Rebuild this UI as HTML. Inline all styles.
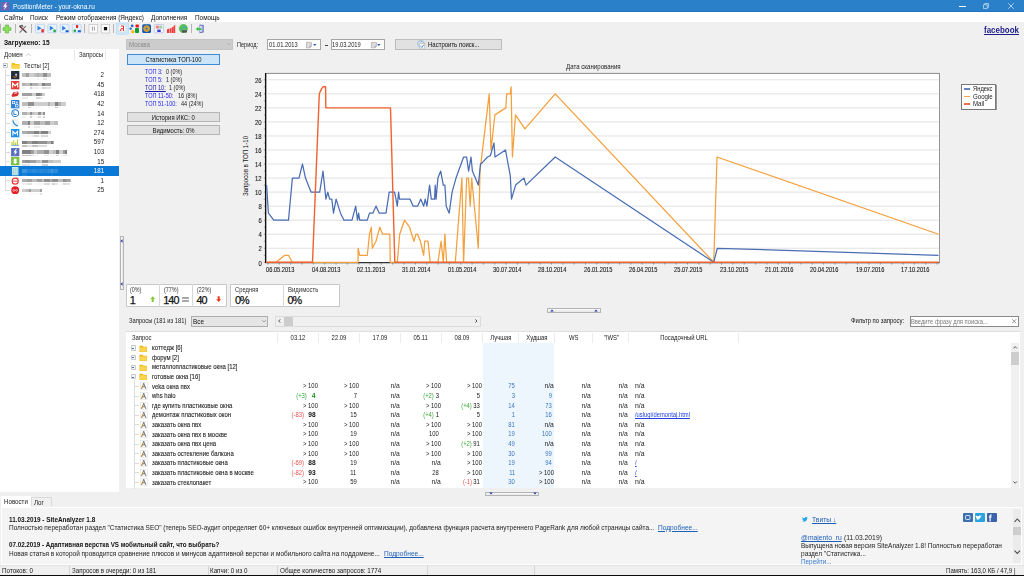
<!DOCTYPE html><html><head><meta charset="utf-8"><style>
html,body{margin:0;padding:0;}
body{width:1024px;height:576px;overflow:hidden;position:relative;background:#f0f0f0;font-family:"Liberation Sans", sans-serif;color:#000;}
.t{position:absolute;white-space:pre;}
.r{position:absolute;box-sizing:border-box;}
svg{position:absolute;overflow:visible;}

</style></head><body>
<div class="r" style="left:0.00px;top:0.00px;width:1024.00px;height:12.00px;background:#2a80c9;"></div>
<div class="r" style="left:0.00px;top:11.20px;width:1024.00px;height:0.80px;background:#1f74c2;"></div>
<svg style="left:1px;top:2px" width="8.5" height="8.5" viewBox="0 0 17 17"><rect x="0" y="0" width="17" height="17" rx="1" fill="#6f63b4"/><path d="M10 1 L4 9.5 L8 9.5 L6 16 L13 7 L9 7 L11.5 1 Z" fill="#fff"/></svg>
<div class="t" style="left:12.50px;top:1.90px;font-size:6.6px;line-height:10px;transform:scaleX(0.9836);transform-origin:0 50%;color:#fff;">PositionMeter - your-okna.ru</div>
<div class="r" style="left:959.30px;top:5.50px;width:6.30px;height:0.50px;background:#fff;"></div>
<svg style="left:983px;top:2.5px" width="6" height="6" viewBox="0 0 12 12"><path d="M1 3.5 H8.5 V11 H1 Z M3.5 3.5 V1 H11 V8.5 H8.5" fill="none" stroke="#fff" stroke-width="1.1"/></svg>
<svg style="left:1007.5px;top:2.5px" width="6" height="6" viewBox="0 0 12 12"><path d="M0.5 0.5 L11.5 11.5 M11.5 0.5 L0.5 11.5" stroke="#fff" stroke-width="1.2"/></svg>
<div class="r" style="left:0.00px;top:12.00px;width:1024.00px;height:9.80px;background:#fff;"></div>
<div class="t" style="left:3.75px;top:13.20px;font-size:6.9px;line-height:10px;transform:scaleX(0.9275);transform-origin:0 50%;color:#111;">Сайты</div>
<div class="t" style="left:30.00px;top:13.20px;font-size:6.9px;line-height:10px;transform:scaleX(0.9275);transform-origin:0 50%;color:#111;">Поиск</div>
<div class="t" style="left:55.75px;top:13.20px;font-size:6.9px;line-height:10px;transform:scaleX(0.9275);transform-origin:0 50%;color:#111;">Режим отображения (Яндекс)</div>
<div class="t" style="left:151.25px;top:13.20px;font-size:6.9px;line-height:10px;transform:scaleX(0.9275);transform-origin:0 50%;color:#111;">Дополнения</div>
<div class="t" style="left:195.00px;top:13.20px;font-size:6.9px;line-height:10px;transform:scaleX(0.9275);transform-origin:0 50%;color:#111;">Помощь</div>
<div class="r" style="left:0.30px;top:23.80px;width:0.70px;height:9.40px;background:#b4b4b4;"></div>
<div class="r" style="left:14.50px;top:23.80px;width:0.70px;height:9.40px;background:#b4b4b4;"></div>
<div class="r" style="left:31.00px;top:23.80px;width:0.70px;height:9.40px;background:#b4b4b4;"></div>
<div class="r" style="left:84.30px;top:23.80px;width:0.70px;height:9.40px;background:#b4b4b4;"></div>
<div class="r" style="left:113.40px;top:23.80px;width:0.70px;height:9.40px;background:#b4b4b4;"></div>
<div class="r" style="left:191.00px;top:23.80px;width:0.70px;height:9.40px;background:#b4b4b4;"></div>
<svg style="left:0;top:0" width="220" height="40" viewBox="0 0 220 40">
<!-- green plus -->
<path d="M5.3 25 H8.6 V27.7 H11 V30.4 H8.6 V33 H5.3 V30.4 H3 V27.7 H5.3 Z" fill="#86e05a" stroke="#4fa42c" stroke-width="0.5"/>
<!-- tools -->
<path d="M19.5 26 L26.5 32.6" stroke="#333" stroke-width="1.3"/>
<path d="M19.6 32.6 L25.8 26.2" stroke="#777" stroke-width="1.2"/>
<path d="M19 25.8 L22.5 24.8 L23.5 27 Z" fill="#555"/>
<path d="M21.5 27.6 L23.3 29.3" stroke="#c33" stroke-width="1.1"/>
<!-- blue icons -->
<g>
<rect x="35.5" y="24.3" width="9" height="8.5" rx="1" fill="#e6f3fb" stroke="#a9c3ec" stroke-width="0.6"/>
<path d="M37.5 25.8 L41.5 28.2 L37.5 30.6 Z" fill="#2b7fe0"/>
<rect x="41.4" y="29.2" width="2.4" height="3.2" fill="#e8272a"/>
</g>
<g>
<rect x="47.9" y="24.3" width="8.8" height="8.5" rx="1" fill="#e6f3fb" stroke="#a9c3ec" stroke-width="0.6"/>
<path d="M49.8 25.8 L53.8 28.2 L49.8 30.6 Z" fill="#2b7fe0"/>
<circle cx="54.6" cy="31" r="1.4" fill="#28a745"/>
</g>
<g>
<rect x="60.2" y="24.3" width="8.8" height="8.5" rx="1" fill="#e6f3fb" stroke="#a9c3ec" stroke-width="0.6"/>
<path d="M62.1 25.8 L66.1 28.2 L62.1 30.6 Z" fill="#2b7fe0"/>
<rect x="65.6" y="30.2" width="3" height="2" fill="#1a5fd0"/>
</g>
<g>
<rect x="72.3" y="24.3" width="8.8" height="8.5" rx="1" fill="#e6f3fb" stroke="#a9c3ec" stroke-width="0.6"/>
<rect x="76" y="25" width="2.2" height="3" fill="#e8272a"/>
<circle cx="74.8" cy="30.8" r="1.4" fill="#28a745"/>
<rect x="77.8" y="30.2" width="3" height="2" fill="#1a5fd0"/>
</g>
<!-- pause -->
<rect x="89" y="24.4" width="8.5" height="8.6" fill="#fcfcfc" stroke="#b8b8b8" stroke-width="0.6"/>
<rect x="91.9" y="26.6" width="0.7" height="4" fill="#777"/>
<rect x="93.9" y="26.6" width="0.7" height="4" fill="#777"/>
<!-- stop -->
<rect x="101.2" y="24.4" width="8.5" height="8.6" fill="#fcfcfc" stroke="#b8b8b8" stroke-width="0.6"/>
<rect x="103.9" y="27" width="3.2" height="3.3" fill="#111"/>
<!-- yandex highlighted -->
<rect x="116.2" y="23" width="12.4" height="11.2" fill="#cde8fc" stroke="#a5d3f7" stroke-width="0.5"/>
<circle cx="122.2" cy="28.6" r="4.2" fill="#f4f4f4" stroke="#ccc" stroke-width="0.4"/>
<path d="M121 26 L123.5 26 L123.5 31.2 M121.3 28.6 L123.4 28.6 M121.3 28.6 L120.2 31.2" stroke="#e33" stroke-width="1" fill="none"/>
<!-- google -->
<circle cx="132.2" cy="25.8" r="1.4" fill="#2a64c4"/>
<circle cx="130.7" cy="28.6" r="1.2" fill="#2a64c4"/>
<circle cx="132.8" cy="31.7" r="1.6" fill="#f5b800"/>
<rect x="135.5" y="24.6" width="3.4" height="3" rx="0.8" fill="#e8191d"/>
<rect x="135" y="28" width="4" height="5" rx="1" fill="#109a3c"/>
<!-- disc -->
<rect x="142.2" y="24.3" width="8.8" height="8.7" rx="1.5" fill="#1456b2"/>
<circle cx="146.6" cy="28.6" r="3.4" fill="#c59d3c"/>
<circle cx="146.6" cy="28.6" r="0.8" fill="#2266cc"/>
<!-- grid -->
<rect x="154.3" y="24.5" width="9.3" height="8.3" rx="1" fill="#f8f8ff" stroke="#a8a8e8" stroke-width="0.6"/>
<rect x="155.8" y="25.6" width="3" height="3" fill="#f08080"/>
<rect x="159.2" y="25.6" width="3" height="3" fill="#9ad49a"/>
<rect x="157.3" y="29.6" width="3.4" height="2.4" fill="#2b3fd8"/>
<!-- red bars -->
<path d="M167 33 V29.4 L169 28.6 V33 Z M169.5 33 V28.8 L171.6 27.8 V33 Z M172 33 V27.4 L173.6 26.3 V33 Z M173.8 33 V26 L175.2 24.8 V33 Z" fill="#f23c3c"/>
<!-- globe -->
<circle cx="183.4" cy="28.6" r="4.5" fill="#5cbf5c"/>
<path d="M181 30 L184 26.5 L186.5 27.5" stroke="#3a9ad8" stroke-width="0.9" fill="none"/>
<rect x="182" y="30.2" width="5" height="2.4" fill="#555"/>
<!-- exit -->
<path d="M199.5 24.6 L203.7 25 V32.6 L199.5 33.2 Z" fill="#6b6bc0"/>
<path d="M200 25.6 L202.5 26 V31.6 L200 32.2 Z" fill="#c9d6f5"/>
<path d="M195.8 29 L198.3 26.8 V28.2 L201.4 28.2 V30 L198.3 30 V31.3 Z" fill="#39c23f"/>
</svg>

<div class="t" style="left:4.40px;top:37.60px;font-size:6.9px;line-height:10px;font-weight:bold;transform:scaleX(0.9502);transform-origin:0 50%;color:#111;">Загружено: 15</div>
<div class="r" style="left:0.00px;top:49.00px;width:119.40px;height:443.00px;background:#fff;"></div>
<div class="r" style="left:73.50px;top:49.50px;width:0.70px;height:10.50px;background:#e8e8e8;"></div>
<div class="r" style="left:105.40px;top:49.50px;width:0.70px;height:10.50px;background:#e8e8e8;"></div>
<div class="t" style="left:3.50px;top:49.90px;font-size:7.3px;line-height:10px;transform:scaleX(0.8447);transform-origin:0 50%;color:#222;">Домен</div>
<svg style="left:25.5px;top:53px" width="5" height="3" viewBox="0 0 10 6"><path d="M1 5.5 L5 1.5 L9 5.5" fill="none" stroke="#a0a0a0" stroke-width="1.2"/></svg>
<div class="t" style="left:79.40px;top:49.90px;font-size:7.3px;line-height:10px;transform:scaleX(0.8186);transform-origin:0 50%;color:#222;">Запросы</div>
<div class="r" style="left:2.50px;top:62.80px;width:5.20px;height:5.20px;background:#f7f7f7;border:0.7px solid #c9c9c9;border-radius:0.8px;"></div>
<div class="r" style="left:4.10px;top:65.10px;width:2.00px;height:0.70px;background:#4a6ad0;"></div>
<svg style="left:10.5px;top:61.8px" width="10" height="7" viewBox="0 0 20 14"><path d="M1 2 H7 L9 4 H17 V13 H1 Z" fill="#f2c21c"/><path d="M1 6 H19 L17 13 H1 Z" fill="#fbd44a"/></svg>
<div class="t" style="left:23.75px;top:60.60px;font-size:7.3px;line-height:10px;transform:scaleX(0.8280);transform-origin:0 50%;color:#222;">Тесты [2]</div>
<div class="r" style="left:4.6px;top:68.5px;width:0;height:121.80px;border-left:0.7px solid #dcdcdc;"></div>
<div class="r" style="left:5.2px;top:74.80px;width:5px;height:0;border-top:0.7px solid #dcdcdc;"></div>
<div class="r" style="left:5.2px;top:84.40px;width:5px;height:0;border-top:0.7px solid #dcdcdc;"></div>
<div class="r" style="left:5.2px;top:94.00px;width:5px;height:0;border-top:0.7px solid #dcdcdc;"></div>
<div class="r" style="left:5.2px;top:103.60px;width:5px;height:0;border-top:0.7px solid #dcdcdc;"></div>
<div class="r" style="left:5.2px;top:113.20px;width:5px;height:0;border-top:0.7px solid #dcdcdc;"></div>
<div class="r" style="left:5.2px;top:122.80px;width:5px;height:0;border-top:0.7px solid #dcdcdc;"></div>
<div class="r" style="left:5.2px;top:132.40px;width:5px;height:0;border-top:0.7px solid #dcdcdc;"></div>
<div class="r" style="left:5.2px;top:142.00px;width:5px;height:0;border-top:0.7px solid #dcdcdc;"></div>
<div class="r" style="left:5.2px;top:151.60px;width:5px;height:0;border-top:0.7px solid #dcdcdc;"></div>
<div class="r" style="left:5.2px;top:161.20px;width:5px;height:0;border-top:0.7px solid #dcdcdc;"></div>
<div class="r" style="left:5.2px;top:170.80px;width:5px;height:0;border-top:0.7px solid #dcdcdc;"></div>
<div class="r" style="left:5.2px;top:180.40px;width:5px;height:0;border-top:0.7px solid #dcdcdc;"></div>
<div class="r" style="left:5.2px;top:190.00px;width:5px;height:0;border-top:0.7px solid #dcdcdc;"></div>
<div class="r" style="left:0.00px;top:166.00px;width:119.40px;height:9.80px;background:#0a78d6;"></div>
<svg style="left:11.3px;top:70.90px" width="8.4" height="8.3" viewBox="0 0 18 18"><rect width="18" height="18" fill="#232f3e"/><path d="M5 12 Q9 15 13 12" stroke="#f90" stroke-width="1.6" fill="none"/><rect x="9" y="6" width="4" height="4" fill="#ddd"/></svg>
<div class="r" style="left:22.4px;top:73.30px;width:28.85px;height:7px;filter:blur(0.7px);"><div style="position:absolute;left:0.00px;top:0;width:3.35px;height:3.5px;background:rgb(190,190,190)"></div><div style="position:absolute;left:0.00px;top:4.6px;width:3.35px;height:1.8px;background:rgb(250,250,250)"></div><div style="position:absolute;left:3.30px;top:0;width:3.35px;height:3.5px;background:rgb(160,160,160)"></div><div style="position:absolute;left:6.60px;top:0;width:5.55px;height:3.5px;background:rgb(205,205,205)"></div><div style="position:absolute;left:6.60px;top:4.6px;width:5.55px;height:1.8px;background:rgb(250,250,250)"></div><div style="position:absolute;left:12.10px;top:0;width:2.25px;height:3.5px;background:rgb(190,190,190)"></div><div style="position:absolute;left:12.10px;top:4.6px;width:2.25px;height:1.8px;background:rgb(250,250,250)"></div><div style="position:absolute;left:14.30px;top:0;width:2.25px;height:3.5px;background:rgb(175,175,175)"></div><div style="position:absolute;left:14.30px;top:4.6px;width:2.25px;height:1.8px;background:rgb(240,240,240)"></div><div style="position:absolute;left:16.50px;top:0;width:4.45px;height:3.5px;background:rgb(190,190,190)"></div><div style="position:absolute;left:16.50px;top:4.6px;width:4.45px;height:1.8px;background:rgb(250,250,250)"></div><div style="position:absolute;left:20.90px;top:0;width:3.35px;height:3.5px;background:rgb(145,145,145)"></div><div style="position:absolute;left:20.90px;top:4.6px;width:3.35px;height:1.8px;background:rgb(230,230,230)"></div><div style="position:absolute;left:24.20px;top:0;width:4.70px;height:3.5px;background:rgb(190,190,190)"></div></div>
<div class="t" style="right:919.50px;top:70.20px;font-size:7.3px;line-height:10px;transform:scaleX(0.8500);transform-origin:100% 50%;color:#222;">2</div>
<svg style="left:11.3px;top:80.50px" width="8.4" height="8.3" viewBox="0 0 18 18"><rect width="18" height="18" fill="#e53a33"/><path d="M3.5 14 V4.5 L9 10 L14.5 4.5 V14" stroke="#fff" stroke-width="2.6" fill="none"/></svg>
<div class="r" style="left:22.4px;top:82.90px;width:28.85px;height:7px;filter:blur(0.7px);"><div style="position:absolute;left:0.00px;top:0;width:2.25px;height:3.5px;background:rgb(175,175,175)"></div><div style="position:absolute;left:0.00px;top:4.6px;width:2.25px;height:1.8px;background:rgb(240,240,240)"></div><div style="position:absolute;left:2.20px;top:0;width:5.55px;height:3.5px;background:rgb(190,190,190)"></div><div style="position:absolute;left:7.70px;top:0;width:2.25px;height:3.5px;background:rgb(145,145,145)"></div><div style="position:absolute;left:7.70px;top:4.6px;width:2.25px;height:1.8px;background:rgb(210,210,210)"></div><div style="position:absolute;left:9.90px;top:0;width:5.55px;height:3.5px;background:rgb(175,175,175)"></div><div style="position:absolute;left:9.90px;top:4.6px;width:5.55px;height:1.8px;background:rgb(240,240,240)"></div><div style="position:absolute;left:15.40px;top:0;width:4.45px;height:3.5px;background:rgb(205,205,205)"></div><div style="position:absolute;left:15.40px;top:4.6px;width:4.45px;height:1.8px;background:rgb(250,250,250)"></div><div style="position:absolute;left:19.80px;top:0;width:3.35px;height:3.5px;background:rgb(130,130,130)"></div><div style="position:absolute;left:19.80px;top:4.6px;width:3.35px;height:1.8px;background:rgb(215,215,215)"></div><div style="position:absolute;left:23.10px;top:0;width:5.55px;height:3.5px;background:rgb(160,160,160)"></div><div style="position:absolute;left:23.10px;top:4.6px;width:5.55px;height:1.8px;background:rgb(225,225,225)"></div></div>
<div class="t" style="right:919.50px;top:79.80px;font-size:7.3px;line-height:10px;transform:scaleX(0.8500);transform-origin:100% 50%;color:#222;">45</div>
<svg style="left:11.3px;top:90.10px" width="8.4" height="8.3" viewBox="0 0 18 18"><path d="M1 12 L5 5 L15 3 L17 8 L14 13 L3 15 Z" fill="#d82b2b"/><path d="M6 6 L13 4.5 L14 7 L7 8 Z" fill="#f3d0d0"/></svg>
<div class="r" style="left:22.4px;top:92.50px;width:22.60px;height:7px;filter:blur(0.7px);"><div style="position:absolute;left:0.00px;top:0;width:5.55px;height:3.5px;background:rgb(160,160,160)"></div><div style="position:absolute;left:0.00px;top:4.6px;width:5.55px;height:1.8px;background:rgb(235,235,235)"></div><div style="position:absolute;left:5.50px;top:0;width:4.45px;height:3.5px;background:rgb(160,160,160)"></div><div style="position:absolute;left:9.90px;top:0;width:3.35px;height:3.5px;background:rgb(205,205,205)"></div><div style="position:absolute;left:13.20px;top:0;width:4.45px;height:3.5px;background:rgb(130,130,130)"></div><div style="position:absolute;left:13.20px;top:4.6px;width:4.45px;height:1.8px;background:rgb(215,215,215)"></div><div style="position:absolute;left:17.60px;top:0;width:2.25px;height:3.5px;background:rgb(145,145,145)"></div><div style="position:absolute;left:17.60px;top:4.6px;width:2.25px;height:1.8px;background:rgb(230,230,230)"></div><div style="position:absolute;left:19.80px;top:0;width:2.85px;height:3.5px;background:rgb(205,205,205)"></div><div style="position:absolute;left:19.80px;top:4.6px;width:2.85px;height:1.8px;background:rgb(250,250,250)"></div></div>
<div class="t" style="right:919.50px;top:89.40px;font-size:7.3px;line-height:10px;transform:scaleX(0.8500);transform-origin:100% 50%;color:#222;">418</div>
<svg style="left:11.3px;top:99.70px" width="8.4" height="8.3" viewBox="0 0 18 18"><rect width="18" height="18" fill="#2e7fd8"/><rect x="3" y="3" width="5" height="5" fill="none" stroke="#fff" stroke-width="1.4"/><rect x="10" y="10" width="5" height="5" fill="none" stroke="#fff" stroke-width="1.4"/><rect x="10" y="3" width="5" height="5" fill="#bcd"/></svg>
<div class="r" style="left:22.4px;top:102.10px;width:44.50px;height:7px;filter:blur(0.7px);"><div style="position:absolute;left:0.00px;top:0;width:5.55px;height:3.5px;background:rgb(190,190,190)"></div><div style="position:absolute;left:0.00px;top:4.6px;width:5.55px;height:1.8px;background:rgb(250,250,250)"></div><div style="position:absolute;left:5.50px;top:0;width:3.35px;height:3.5px;background:rgb(145,145,145)"></div><div style="position:absolute;left:5.50px;top:4.6px;width:3.35px;height:1.8px;background:rgb(210,210,210)"></div><div style="position:absolute;left:8.80px;top:0;width:3.35px;height:3.5px;background:rgb(145,145,145)"></div><div style="position:absolute;left:12.10px;top:0;width:3.35px;height:3.5px;background:rgb(205,205,205)"></div><div style="position:absolute;left:12.10px;top:4.6px;width:3.35px;height:1.8px;background:rgb(250,250,250)"></div><div style="position:absolute;left:15.40px;top:0;width:2.25px;height:3.5px;background:rgb(205,205,205)"></div><div style="position:absolute;left:15.40px;top:4.6px;width:2.25px;height:1.8px;background:rgb(250,250,250)"></div><div style="position:absolute;left:17.60px;top:0;width:3.35px;height:3.5px;background:rgb(205,205,205)"></div><div style="position:absolute;left:17.60px;top:4.6px;width:3.35px;height:1.8px;background:rgb(250,250,250)"></div><div style="position:absolute;left:20.90px;top:0;width:4.45px;height:3.5px;background:rgb(205,205,205)"></div><div style="position:absolute;left:25.30px;top:0;width:2.25px;height:3.5px;background:rgb(175,175,175)"></div><div style="position:absolute;left:25.30px;top:4.6px;width:2.25px;height:1.8px;background:rgb(250,250,250)"></div><div style="position:absolute;left:27.50px;top:0;width:5.55px;height:3.5px;background:rgb(205,205,205)"></div><div style="position:absolute;left:27.50px;top:4.6px;width:5.55px;height:1.8px;background:rgb(250,250,250)"></div><div style="position:absolute;left:33.00px;top:0;width:2.25px;height:3.5px;background:rgb(130,130,130)"></div><div style="position:absolute;left:33.00px;top:4.6px;width:2.25px;height:1.8px;background:rgb(195,195,195)"></div><div style="position:absolute;left:35.20px;top:0;width:3.35px;height:3.5px;background:rgb(175,175,175)"></div><div style="position:absolute;left:35.20px;top:4.6px;width:3.35px;height:1.8px;background:rgb(250,250,250)"></div><div style="position:absolute;left:38.50px;top:0;width:5.55px;height:3.5px;background:rgb(205,205,205)"></div></div>
<div class="t" style="right:919.50px;top:99.00px;font-size:7.3px;line-height:10px;transform:scaleX(0.8500);transform-origin:100% 50%;color:#222;">42</div>
<svg style="left:11.3px;top:109.30px" width="8.4" height="8.3" viewBox="0 0 18 18"><circle cx="9" cy="9" r="7.5" fill="#fff" stroke="#1c78d0" stroke-width="2.2"/><path d="M6 5 V12 H12" stroke="#1c78d0" stroke-width="2" fill="none"/></svg>
<div class="r" style="left:22.4px;top:111.70px;width:22.60px;height:7px;filter:blur(0.7px);"><div style="position:absolute;left:0.00px;top:0;width:2.25px;height:3.5px;background:rgb(175,175,175)"></div><div style="position:absolute;left:0.00px;top:4.6px;width:2.25px;height:1.8px;background:rgb(240,240,240)"></div><div style="position:absolute;left:2.20px;top:0;width:2.25px;height:3.5px;background:rgb(175,175,175)"></div><div style="position:absolute;left:2.20px;top:4.6px;width:2.25px;height:1.8px;background:rgb(250,250,250)"></div><div style="position:absolute;left:4.40px;top:0;width:3.35px;height:3.5px;background:rgb(205,205,205)"></div><div style="position:absolute;left:7.70px;top:0;width:2.25px;height:3.5px;background:rgb(145,145,145)"></div><div style="position:absolute;left:7.70px;top:4.6px;width:2.25px;height:1.8px;background:rgb(210,210,210)"></div><div style="position:absolute;left:9.90px;top:0;width:2.25px;height:3.5px;background:rgb(190,190,190)"></div><div style="position:absolute;left:9.90px;top:4.6px;width:2.25px;height:1.8px;background:rgb(250,250,250)"></div><div style="position:absolute;left:12.10px;top:0;width:3.35px;height:3.5px;background:rgb(205,205,205)"></div><div style="position:absolute;left:12.10px;top:4.6px;width:3.35px;height:1.8px;background:rgb(250,250,250)"></div><div style="position:absolute;left:15.40px;top:0;width:3.35px;height:3.5px;background:rgb(145,145,145)"></div><div style="position:absolute;left:15.40px;top:4.6px;width:3.35px;height:1.8px;background:rgb(220,220,220)"></div><div style="position:absolute;left:18.70px;top:0;width:2.25px;height:3.5px;background:rgb(205,205,205)"></div><div style="position:absolute;left:18.70px;top:4.6px;width:2.25px;height:1.8px;background:rgb(250,250,250)"></div><div style="position:absolute;left:20.90px;top:0;width:1.75px;height:3.5px;background:rgb(145,145,145)"></div><div style="position:absolute;left:20.90px;top:4.6px;width:1.75px;height:1.8px;background:rgb(210,210,210)"></div></div>
<div class="t" style="right:919.50px;top:108.60px;font-size:7.3px;line-height:10px;transform:scaleX(0.8500);transform-origin:100% 50%;color:#222;">14</div>
<svg style="left:11.3px;top:118.90px" width="8.4" height="8.3" viewBox="0 0 18 18"><path d="M2 1 H12 L17 9 L12 17 H2 Z" fill="#f2f2f2" stroke="#ddd" stroke-width="0.8"/><path d="M4 3 Q6 13 15 15" stroke="#1b8fe0" stroke-width="2.6" fill="none"/></svg>
<div class="r" style="left:22.4px;top:121.30px;width:35.10px;height:7px;filter:blur(0.7px);"><div style="position:absolute;left:0.00px;top:0;width:5.55px;height:3.5px;background:rgb(175,175,175)"></div><div style="position:absolute;left:0.00px;top:4.6px;width:5.55px;height:1.8px;background:rgb(250,250,250)"></div><div style="position:absolute;left:5.50px;top:0;width:2.25px;height:3.5px;background:rgb(130,130,130)"></div><div style="position:absolute;left:5.50px;top:4.6px;width:2.25px;height:1.8px;background:rgb(215,215,215)"></div><div style="position:absolute;left:7.70px;top:0;width:4.45px;height:3.5px;background:rgb(205,205,205)"></div><div style="position:absolute;left:7.70px;top:4.6px;width:4.45px;height:1.8px;background:rgb(250,250,250)"></div><div style="position:absolute;left:12.10px;top:0;width:5.55px;height:3.5px;background:rgb(160,160,160)"></div><div style="position:absolute;left:12.10px;top:4.6px;width:5.55px;height:1.8px;background:rgb(235,235,235)"></div><div style="position:absolute;left:17.60px;top:0;width:2.25px;height:3.5px;background:rgb(190,190,190)"></div><div style="position:absolute;left:17.60px;top:4.6px;width:2.25px;height:1.8px;background:rgb(250,250,250)"></div><div style="position:absolute;left:19.80px;top:0;width:3.35px;height:3.5px;background:rgb(190,190,190)"></div><div style="position:absolute;left:19.80px;top:4.6px;width:3.35px;height:1.8px;background:rgb(250,250,250)"></div><div style="position:absolute;left:23.10px;top:0;width:4.45px;height:3.5px;background:rgb(160,160,160)"></div><div style="position:absolute;left:27.50px;top:0;width:4.45px;height:3.5px;background:rgb(205,205,205)"></div><div style="position:absolute;left:27.50px;top:4.6px;width:4.45px;height:1.8px;background:rgb(250,250,250)"></div><div style="position:absolute;left:31.90px;top:0;width:3.25px;height:3.5px;background:rgb(190,190,190)"></div><div style="position:absolute;left:31.90px;top:4.6px;width:3.25px;height:1.8px;background:rgb(250,250,250)"></div></div>
<div class="t" style="right:919.50px;top:118.20px;font-size:7.3px;line-height:10px;transform:scaleX(0.8500);transform-origin:100% 50%;color:#222;">12</div>
<svg style="left:11.3px;top:128.50px" width="8.4" height="8.3" viewBox="0 0 18 18"><rect width="18" height="18" fill="#1d8fea"/><path d="M4 14 V5 L9 10 L14 5 V14" stroke="#fff" stroke-width="2.4" fill="none"/></svg>
<div class="r" style="left:22.4px;top:130.90px;width:28.85px;height:7px;filter:blur(0.7px);"><div style="position:absolute;left:0.00px;top:0;width:4.45px;height:3.5px;background:rgb(175,175,175)"></div><div style="position:absolute;left:0.00px;top:4.6px;width:4.45px;height:1.8px;background:rgb(250,250,250)"></div><div style="position:absolute;left:4.40px;top:0;width:5.55px;height:3.5px;background:rgb(160,160,160)"></div><div style="position:absolute;left:4.40px;top:4.6px;width:5.55px;height:1.8px;background:rgb(245,245,245)"></div><div style="position:absolute;left:9.90px;top:0;width:2.25px;height:3.5px;background:rgb(160,160,160)"></div><div style="position:absolute;left:9.90px;top:4.6px;width:2.25px;height:1.8px;background:rgb(235,235,235)"></div><div style="position:absolute;left:12.10px;top:0;width:4.45px;height:3.5px;background:rgb(130,130,130)"></div><div style="position:absolute;left:12.10px;top:4.6px;width:4.45px;height:1.8px;background:rgb(215,215,215)"></div><div style="position:absolute;left:16.50px;top:0;width:2.25px;height:3.5px;background:rgb(175,175,175)"></div><div style="position:absolute;left:16.50px;top:4.6px;width:2.25px;height:1.8px;background:rgb(250,250,250)"></div><div style="position:absolute;left:18.70px;top:0;width:2.25px;height:3.5px;background:rgb(130,130,130)"></div><div style="position:absolute;left:18.70px;top:4.6px;width:2.25px;height:1.8px;background:rgb(215,215,215)"></div><div style="position:absolute;left:20.90px;top:0;width:4.45px;height:3.5px;background:rgb(130,130,130)"></div><div style="position:absolute;left:20.90px;top:4.6px;width:4.45px;height:1.8px;background:rgb(215,215,215)"></div><div style="position:absolute;left:25.30px;top:0;width:3.60px;height:3.5px;background:rgb(205,205,205)"></div><div style="position:absolute;left:25.30px;top:4.6px;width:3.60px;height:1.8px;background:rgb(250,250,250)"></div></div>
<div class="t" style="right:919.50px;top:127.80px;font-size:7.3px;line-height:10px;transform:scaleX(0.8500);transform-origin:100% 50%;color:#222;">274</div>
<svg style="left:11.3px;top:138.10px" width="8.4" height="8.3" viewBox="0 0 18 18"><rect width="18" height="18" fill="#fff"/><path d="M2 16 V8 M6 16 V5 M10 16 V10 M14 16 V3" stroke="#b9cc3a" stroke-width="2.4"/><path d="M1 16 H17" stroke="#3a8fd8" stroke-width="1.5"/></svg>
<div class="r" style="left:22.4px;top:140.50px;width:32.00px;height:7px;filter:blur(0.7px);"><div style="position:absolute;left:0.00px;top:0;width:4.45px;height:3.5px;background:rgb(130,130,130)"></div><div style="position:absolute;left:0.00px;top:4.6px;width:4.45px;height:1.8px;background:rgb(195,195,195)"></div><div style="position:absolute;left:4.40px;top:0;width:5.55px;height:3.5px;background:rgb(160,160,160)"></div><div style="position:absolute;left:4.40px;top:4.6px;width:5.55px;height:1.8px;background:rgb(225,225,225)"></div><div style="position:absolute;left:9.90px;top:0;width:5.55px;height:3.5px;background:rgb(130,130,130)"></div><div style="position:absolute;left:9.90px;top:4.6px;width:5.55px;height:1.8px;background:rgb(195,195,195)"></div><div style="position:absolute;left:15.40px;top:0;width:3.35px;height:3.5px;background:rgb(145,145,145)"></div><div style="position:absolute;left:15.40px;top:4.6px;width:3.35px;height:1.8px;background:rgb(220,220,220)"></div><div style="position:absolute;left:18.70px;top:0;width:5.55px;height:3.5px;background:rgb(145,145,145)"></div><div style="position:absolute;left:18.70px;top:4.6px;width:5.55px;height:1.8px;background:rgb(220,220,220)"></div><div style="position:absolute;left:24.20px;top:0;width:4.45px;height:3.5px;background:rgb(175,175,175)"></div><div style="position:absolute;left:28.60px;top:0;width:2.25px;height:3.5px;background:rgb(130,130,130)"></div><div style="position:absolute;left:30.80px;top:0;width:1.25px;height:3.5px;background:rgb(175,175,175)"></div><div style="position:absolute;left:30.80px;top:4.6px;width:1.25px;height:1.8px;background:rgb(250,250,250)"></div></div>
<div class="t" style="right:919.50px;top:137.40px;font-size:7.3px;line-height:10px;transform:scaleX(0.8500);transform-origin:100% 50%;color:#222;">597</div>
<svg style="left:11.3px;top:147.70px" width="8.4" height="8.3" viewBox="0 0 18 18"><rect width="18" height="18" fill="#5a6ec2"/><path d="M11 1.5 L5 10 L9 10 L7 16.5 L14 7.5 L10 7.5 L12.5 1.5 Z" fill="#fff"/></svg>
<div class="r" style="left:22.4px;top:150.10px;width:44.50px;height:7px;filter:blur(0.7px);"><div style="position:absolute;left:0.00px;top:0;width:3.35px;height:3.5px;background:rgb(130,130,130)"></div><div style="position:absolute;left:0.00px;top:4.6px;width:3.35px;height:1.8px;background:rgb(195,195,195)"></div><div style="position:absolute;left:3.30px;top:0;width:5.55px;height:3.5px;background:rgb(130,130,130)"></div><div style="position:absolute;left:3.30px;top:4.6px;width:5.55px;height:1.8px;background:rgb(195,195,195)"></div><div style="position:absolute;left:8.80px;top:0;width:3.35px;height:3.5px;background:rgb(160,160,160)"></div><div style="position:absolute;left:8.80px;top:4.6px;width:3.35px;height:1.8px;background:rgb(225,225,225)"></div><div style="position:absolute;left:12.10px;top:0;width:2.25px;height:3.5px;background:rgb(205,205,205)"></div><div style="position:absolute;left:12.10px;top:4.6px;width:2.25px;height:1.8px;background:rgb(250,250,250)"></div><div style="position:absolute;left:14.30px;top:0;width:2.25px;height:3.5px;background:rgb(175,175,175)"></div><div style="position:absolute;left:14.30px;top:4.6px;width:2.25px;height:1.8px;background:rgb(250,250,250)"></div><div style="position:absolute;left:16.50px;top:0;width:5.55px;height:3.5px;background:rgb(175,175,175)"></div><div style="position:absolute;left:22.00px;top:0;width:4.45px;height:3.5px;background:rgb(145,145,145)"></div><div style="position:absolute;left:22.00px;top:4.6px;width:4.45px;height:1.8px;background:rgb(230,230,230)"></div><div style="position:absolute;left:26.40px;top:0;width:4.45px;height:3.5px;background:rgb(205,205,205)"></div><div style="position:absolute;left:26.40px;top:4.6px;width:4.45px;height:1.8px;background:rgb(250,250,250)"></div><div style="position:absolute;left:30.80px;top:0;width:3.35px;height:3.5px;background:rgb(190,190,190)"></div><div style="position:absolute;left:30.80px;top:4.6px;width:3.35px;height:1.8px;background:rgb(250,250,250)"></div><div style="position:absolute;left:34.10px;top:0;width:2.25px;height:3.5px;background:rgb(130,130,130)"></div><div style="position:absolute;left:34.10px;top:4.6px;width:2.25px;height:1.8px;background:rgb(215,215,215)"></div><div style="position:absolute;left:36.30px;top:0;width:4.45px;height:3.5px;background:rgb(205,205,205)"></div><div style="position:absolute;left:36.30px;top:4.6px;width:4.45px;height:1.8px;background:rgb(250,250,250)"></div><div style="position:absolute;left:40.70px;top:0;width:2.25px;height:3.5px;background:rgb(160,160,160)"></div><div style="position:absolute;left:40.70px;top:4.6px;width:2.25px;height:1.8px;background:rgb(235,235,235)"></div><div style="position:absolute;left:42.90px;top:0;width:1.65px;height:3.5px;background:rgb(130,130,130)"></div><div style="position:absolute;left:42.90px;top:4.6px;width:1.65px;height:1.8px;background:rgb(215,215,215)"></div></div>
<div class="t" style="right:919.50px;top:147.00px;font-size:7.3px;line-height:10px;transform:scaleX(0.8500);transform-origin:100% 50%;color:#222;">103</div>
<svg style="left:11.3px;top:157.30px" width="8.4" height="8.3" viewBox="0 0 18 18"><rect width="18" height="18" fill="#7cc242"/><path d="M6 4 V11 H4 L9 15 L14 11 H12 V4 Z" fill="#fff"/></svg>
<div class="r" style="left:22.4px;top:159.70px;width:38.85px;height:7px;filter:blur(0.7px);"><div style="position:absolute;left:0.00px;top:0;width:2.25px;height:3.5px;background:rgb(160,160,160)"></div><div style="position:absolute;left:0.00px;top:4.6px;width:2.25px;height:1.8px;background:rgb(225,225,225)"></div><div style="position:absolute;left:2.20px;top:0;width:5.55px;height:3.5px;background:rgb(145,145,145)"></div><div style="position:absolute;left:2.20px;top:4.6px;width:5.55px;height:1.8px;background:rgb(230,230,230)"></div><div style="position:absolute;left:7.70px;top:0;width:5.55px;height:3.5px;background:rgb(160,160,160)"></div><div style="position:absolute;left:7.70px;top:4.6px;width:5.55px;height:1.8px;background:rgb(245,245,245)"></div><div style="position:absolute;left:13.20px;top:0;width:4.45px;height:3.5px;background:rgb(190,190,190)"></div><div style="position:absolute;left:17.60px;top:0;width:2.25px;height:3.5px;background:rgb(205,205,205)"></div><div style="position:absolute;left:17.60px;top:4.6px;width:2.25px;height:1.8px;background:rgb(250,250,250)"></div><div style="position:absolute;left:19.80px;top:0;width:5.55px;height:3.5px;background:rgb(145,145,145)"></div><div style="position:absolute;left:19.80px;top:4.6px;width:5.55px;height:1.8px;background:rgb(210,210,210)"></div><div style="position:absolute;left:25.30px;top:0;width:5.55px;height:3.5px;background:rgb(190,190,190)"></div><div style="position:absolute;left:25.30px;top:4.6px;width:5.55px;height:1.8px;background:rgb(250,250,250)"></div><div style="position:absolute;left:30.80px;top:0;width:3.35px;height:3.5px;background:rgb(205,205,205)"></div><div style="position:absolute;left:30.80px;top:4.6px;width:3.35px;height:1.8px;background:rgb(250,250,250)"></div><div style="position:absolute;left:34.10px;top:0;width:2.25px;height:3.5px;background:rgb(205,205,205)"></div><div style="position:absolute;left:34.10px;top:4.6px;width:2.25px;height:1.8px;background:rgb(250,250,250)"></div><div style="position:absolute;left:36.30px;top:0;width:2.60px;height:3.5px;background:rgb(205,205,205)"></div><div style="position:absolute;left:36.30px;top:4.6px;width:2.60px;height:1.8px;background:rgb(250,250,250)"></div></div>
<div class="t" style="right:919.50px;top:156.60px;font-size:7.3px;line-height:10px;transform:scaleX(0.8500);transform-origin:100% 50%;color:#222;">15</div>
<svg style="left:11.3px;top:166.90px" width="8.4" height="8.3" viewBox="0 0 18 18"><rect x="2" y="0" width="14" height="18" fill="#cde9ea"/><path d="M5 2 V17 M9 2 V17 M13 2 V17" stroke="#8fc9cc" stroke-width="1.5"/></svg>
<div class="r" style="left:22.4px;top:169.30px;width:35.10px;height:7px;filter:blur(0.7px);"><div style="position:absolute;left:0.00px;top:0;width:4.45px;height:3.5px;background:rgba(255,255,255,0.22)"></div><div style="position:absolute;left:0.00px;top:4.6px;width:4.45px;height:1.8px;background:rgba(255,255,255,0.09)"></div><div style="position:absolute;left:4.40px;top:0;width:5.55px;height:3.5px;background:rgba(255,255,255,0.11)"></div><div style="position:absolute;left:4.40px;top:4.6px;width:5.55px;height:1.8px;background:rgba(255,255,255,0.01)"></div><div style="position:absolute;left:9.90px;top:0;width:3.35px;height:3.5px;background:rgba(255,255,255,0.14)"></div><div style="position:absolute;left:13.20px;top:0;width:4.45px;height:3.5px;background:rgba(255,255,255,0.11)"></div><div style="position:absolute;left:17.60px;top:0;width:2.25px;height:3.5px;background:rgba(255,255,255,0.14)"></div><div style="position:absolute;left:17.60px;top:4.6px;width:2.25px;height:1.8px;background:rgba(255,255,255,0.01)"></div><div style="position:absolute;left:19.80px;top:0;width:5.55px;height:3.5px;background:rgba(255,255,255,0.11)"></div><div style="position:absolute;left:19.80px;top:4.6px;width:5.55px;height:1.8px;background:rgba(255,255,255,0.01)"></div><div style="position:absolute;left:25.30px;top:0;width:3.35px;height:3.5px;background:rgba(255,255,255,0.14)"></div><div style="position:absolute;left:28.60px;top:0;width:2.25px;height:3.5px;background:rgba(255,255,255,0.22)"></div><div style="position:absolute;left:28.60px;top:4.6px;width:2.25px;height:1.8px;background:rgba(255,255,255,0.08)"></div><div style="position:absolute;left:30.80px;top:0;width:4.35px;height:3.5px;background:rgba(255,255,255,0.14)"></div></div>
<div class="t" style="right:919.50px;top:166.20px;font-size:7.3px;line-height:10px;transform:scaleX(0.8500);transform-origin:100% 50%;color:#fff;">181</div>
<svg style="left:11.3px;top:176.50px" width="8.4" height="8.3" viewBox="0 0 18 18"><rect width="18" height="18" fill="#fff"/><circle cx="9" cy="9" r="6.5" fill="none" stroke="#e43a36" stroke-width="2.5"/><path d="M3 9 H15" stroke="#e43a36" stroke-width="2"/><path d="M13 1 L16 4" stroke="#e43a36" stroke-width="2"/></svg>
<div class="r" style="left:22.4px;top:178.90px;width:48.20px;height:7px;filter:blur(0.7px);"><div style="position:absolute;left:0.00px;top:0;width:4.45px;height:3.5px;background:rgb(175,175,175)"></div><div style="position:absolute;left:0.00px;top:4.6px;width:4.45px;height:1.8px;background:rgb(240,240,240)"></div><div style="position:absolute;left:4.40px;top:0;width:5.55px;height:3.5px;background:rgb(160,160,160)"></div><div style="position:absolute;left:4.40px;top:4.6px;width:5.55px;height:1.8px;background:rgb(225,225,225)"></div><div style="position:absolute;left:9.90px;top:0;width:4.45px;height:3.5px;background:rgb(190,190,190)"></div><div style="position:absolute;left:9.90px;top:4.6px;width:4.45px;height:1.8px;background:rgb(250,250,250)"></div><div style="position:absolute;left:14.30px;top:0;width:5.55px;height:3.5px;background:rgb(160,160,160)"></div><div style="position:absolute;left:14.30px;top:4.6px;width:5.55px;height:1.8px;background:rgb(245,245,245)"></div><div style="position:absolute;left:19.80px;top:0;width:2.25px;height:3.5px;background:rgb(190,190,190)"></div><div style="position:absolute;left:19.80px;top:4.6px;width:2.25px;height:1.8px;background:rgb(250,250,250)"></div><div style="position:absolute;left:22.00px;top:0;width:5.55px;height:3.5px;background:rgb(145,145,145)"></div><div style="position:absolute;left:22.00px;top:4.6px;width:5.55px;height:1.8px;background:rgb(220,220,220)"></div><div style="position:absolute;left:27.50px;top:0;width:2.25px;height:3.5px;background:rgb(175,175,175)"></div><div style="position:absolute;left:27.50px;top:4.6px;width:2.25px;height:1.8px;background:rgb(250,250,250)"></div><div style="position:absolute;left:29.70px;top:0;width:3.35px;height:3.5px;background:rgb(145,145,145)"></div><div style="position:absolute;left:29.70px;top:4.6px;width:3.35px;height:1.8px;background:rgb(210,210,210)"></div><div style="position:absolute;left:33.00px;top:0;width:2.25px;height:3.5px;background:rgb(145,145,145)"></div><div style="position:absolute;left:33.00px;top:4.6px;width:2.25px;height:1.8px;background:rgb(230,230,230)"></div><div style="position:absolute;left:35.20px;top:0;width:5.55px;height:3.5px;background:rgb(190,190,190)"></div><div style="position:absolute;left:35.20px;top:4.6px;width:5.55px;height:1.8px;background:rgb(250,250,250)"></div><div style="position:absolute;left:40.70px;top:0;width:3.35px;height:3.5px;background:rgb(145,145,145)"></div><div style="position:absolute;left:40.70px;top:4.6px;width:3.35px;height:1.8px;background:rgb(220,220,220)"></div><div style="position:absolute;left:44.00px;top:0;width:3.35px;height:3.5px;background:rgb(160,160,160)"></div><div style="position:absolute;left:44.00px;top:4.6px;width:3.35px;height:1.8px;background:rgb(225,225,225)"></div><div style="position:absolute;left:47.30px;top:0;width:0.95px;height:3.5px;background:rgb(190,190,190)"></div><div style="position:absolute;left:47.30px;top:4.6px;width:0.95px;height:1.8px;background:rgb(250,250,250)"></div></div>
<div class="t" style="right:919.50px;top:175.80px;font-size:7.3px;line-height:10px;transform:scaleX(0.8500);transform-origin:100% 50%;color:#222;">1</div>
<svg style="left:11.3px;top:186.10px" width="8.4" height="8.3" viewBox="0 0 18 18"><circle cx="9" cy="9" r="8.5" fill="#e21f26"/><circle cx="6" cy="9.5" r="2" fill="none" stroke="#fff" stroke-width="1.2"/><circle cx="12" cy="9.5" r="2" fill="none" stroke="#fff" stroke-width="1.2"/></svg>
<div class="r" style="left:22.4px;top:188.50px;width:19.50px;height:7px;filter:blur(0.7px);"><div style="position:absolute;left:0.00px;top:0;width:3.35px;height:3.5px;background:rgb(205,205,205)"></div><div style="position:absolute;left:0.00px;top:4.6px;width:3.35px;height:1.8px;background:rgb(250,250,250)"></div><div style="position:absolute;left:3.30px;top:0;width:3.35px;height:3.5px;background:rgb(190,190,190)"></div><div style="position:absolute;left:6.60px;top:0;width:2.25px;height:3.5px;background:rgb(160,160,160)"></div><div style="position:absolute;left:6.60px;top:4.6px;width:2.25px;height:1.8px;background:rgb(245,245,245)"></div><div style="position:absolute;left:8.80px;top:0;width:4.45px;height:3.5px;background:rgb(205,205,205)"></div><div style="position:absolute;left:8.80px;top:4.6px;width:4.45px;height:1.8px;background:rgb(250,250,250)"></div><div style="position:absolute;left:13.20px;top:0;width:4.45px;height:3.5px;background:rgb(205,205,205)"></div><div style="position:absolute;left:13.20px;top:4.6px;width:4.45px;height:1.8px;background:rgb(250,250,250)"></div><div style="position:absolute;left:17.60px;top:0;width:1.95px;height:3.5px;background:rgb(160,160,160)"></div><div style="position:absolute;left:17.60px;top:4.6px;width:1.95px;height:1.8px;background:rgb(225,225,225)"></div></div>
<div class="t" style="right:919.50px;top:185.40px;font-size:7.3px;line-height:10px;transform:scaleX(0.8500);transform-origin:100% 50%;color:#222;">25</div>
<div class="r" style="left:119.50px;top:236.00px;width:4.50px;height:53.50px;background:linear-gradient(90deg,#fafafa,#e6e6e6);border:0.6px solid #b4b4b4;border-radius:0.6px;"></div>
<svg style="left:120px;top:239px" width="3" height="4" viewBox="0 0 6 8"><path d="M5 0.5 L1 4 L5 7.5 Z" fill="#2233aa"/></svg>
<svg style="left:120px;top:282px" width="3" height="4" viewBox="0 0 6 8"><path d="M5 0.5 L1 4 L5 7.5 Z" fill="#2233aa"/></svg>
<div class="r" style="left:126.25px;top:39.00px;width:106.85px;height:11.00px;background:#cccccc;border:0.6px solid #c4c4c4;"></div>
<div class="t" style="left:128.80px;top:39.90px;font-size:7.3px;line-height:10px;transform:scaleX(0.8426);transform-origin:0 50%;color:#8a8a8a;">Москва</div>
<svg style="left:226.5px;top:43.2px" width="4" height="2.5" viewBox="0 0 8 5"><path d="M0.5 0.5 L4 4 L7.5 0.5" fill="none" stroke="#9a9a9a" stroke-width="1"/></svg>
<div class="t" style="left:237.00px;top:39.50px;font-size:6.9px;line-height:10px;transform:scaleX(0.8079);transform-origin:0 50%;color:#222;">Период:</div>
<div class="r" style="left:267.00px;top:39.00px;width:53.60px;height:11.10px;background:#fff;border:0.7px solid #a6a6a6;"></div>
<div class="t" style="left:268.80px;top:39.50px;font-size:6.9px;line-height:10px;transform:scaleX(0.8325);transform-origin:0 50%;color:#222;">01.01.2013</div>
<svg style="left:306.40px;top:41.7px" width="5.8" height="6.2" viewBox="0 0 12 13"><path d="M0.7 0.7 H11.3 V9 L8 12.3 H0.7 Z" fill="#dcdcdc" stroke="#8a8a8a" stroke-width="1"/><path d="M11.3 9 H8 V12.3" fill="#b8b8b8" stroke="#8a8a8a" stroke-width="0.8"/></svg>
<svg style="left:312.90px;top:43.9px" width="3.6" height="2.2" viewBox="0 0 7 4"><path d="M0 0 H7 L3.5 4 Z" fill="#2b5fb8"/></svg>
<div class="r" style="left:330.50px;top:39.00px;width:54.20px;height:11.10px;background:#fff;border:0.7px solid #a6a6a6;"></div>
<div class="t" style="left:332.30px;top:39.50px;font-size:6.9px;line-height:10px;transform:scaleX(0.8325);transform-origin:0 50%;color:#222;">19.03.2019</div>
<svg style="left:370.50px;top:41.7px" width="5.8" height="6.2" viewBox="0 0 12 13"><path d="M0.7 0.7 H11.3 V9 L8 12.3 H0.7 Z" fill="#dcdcdc" stroke="#8a8a8a" stroke-width="1"/><path d="M11.3 9 H8 V12.3" fill="#b8b8b8" stroke="#8a8a8a" stroke-width="0.8"/></svg>
<svg style="left:377.00px;top:43.9px" width="3.6" height="2.2" viewBox="0 0 7 4"><path d="M0 0 H7 L3.5 4 Z" fill="#2b5fb8"/></svg>
<div class="r" style="left:324.60px;top:44.70px;width:3.40px;height:0.55px;background:#444;"></div>
<div class="r" style="left:395.20px;top:39.20px;width:106.70px;height:10.80px;background:#e1e1e1;border:0.8px solid #bdbdbd;"></div>
<svg style="left:417.3px;top:40.1px" width="9" height="9.3" viewBox="0 0 18 18.6"><circle cx="7.5" cy="7.5" r="6.3" fill="none" stroke="#a9c8e4" stroke-width="2.6"/><path d="M7.5 0.5 L10.5 2.8 L7.5 5 Z" fill="#8fb6dc"/><rect x="5.8" y="7.2" width="9.5" height="10.6" fill="#fafafa" stroke="#a0a0a0" stroke-width="0.9"/><path d="M7.6 12.6 L9.6 15 L13.4 9.6" stroke="#2a7fd0" stroke-width="1.7" fill="none"/></svg>
<div class="t" style="left:428.00px;top:40.40px;font-size:7.2px;line-height:10px;transform:scaleX(0.8326);transform-origin:0 50%;color:#111;">Настроить поиск...</div>
<div class="t" style="left:984.30px;top:26.00px;font-size:8.2px;line-height:10px;font-weight:bold;transform:scaleX(0.9722);transform-origin:0 50%;color:#1c1c86;text-decoration:underline;">facebook</div>
<div class="r" style="left:126.90px;top:53.75px;width:93.10px;height:10.85px;background:#cce4f7;border:0.8px solid #3e8ad6;"></div>
<div class="t" style="left:137.16px;width:73.08px;text-align:center;top:54.50px;font-size:7.2px;line-height:10px;transform:scaleX(0.8151);transform-origin:50% 50%;color:#111;">Статистика ТОП-100</div>
<div class="t" style="left:144.70px;top:67.10px;font-size:6.9px;line-height:10px;transform:scaleX(0.8070);transform-origin:0 50%;color:#2a2af0;">ТОП 3:</div>
<div class="t" style="left:165.80px;top:67.10px;font-size:6.9px;line-height:10px;transform:scaleX(0.7977);transform-origin:0 50%;color:#222;">0 (0%)</div>
<div class="t" style="left:144.70px;top:74.90px;font-size:6.9px;line-height:10px;transform:scaleX(0.8070);transform-origin:0 50%;color:#2a2af0;">ТОП 5:</div>
<div class="t" style="left:165.80px;top:74.90px;font-size:6.9px;line-height:10px;transform:scaleX(0.7977);transform-origin:0 50%;color:#222;">1 (0%)</div>
<div class="t" style="left:144.70px;top:82.90px;font-size:6.9px;line-height:10px;transform:scaleX(0.8070);transform-origin:0 50%;text-decoration:underline;color:#1a1aa8;">ТОП 10:</div>
<div class="t" style="left:169.30px;top:82.90px;font-size:6.9px;line-height:10px;transform:scaleX(0.7977);transform-origin:0 50%;color:#222;">1 (0%)</div>
<div class="t" style="left:144.70px;top:90.80px;font-size:6.9px;line-height:10px;transform:scaleX(0.8070);transform-origin:0 50%;color:#2a2af0;">ТОП 11-50:</div>
<div class="t" style="left:178.00px;top:90.80px;font-size:6.9px;line-height:10px;transform:scaleX(0.7977);transform-origin:0 50%;color:#222;">16 (8%)</div>
<div class="t" style="left:144.70px;top:98.70px;font-size:6.9px;line-height:10px;transform:scaleX(0.8070);transform-origin:0 50%;color:#2a2af0;">ТОП 51-100:</div>
<div class="t" style="left:181.10px;top:98.70px;font-size:6.9px;line-height:10px;transform:scaleX(0.7977);transform-origin:0 50%;color:#222;">44 (24%)</div>
<div class="r" style="left:127.20px;top:112.30px;width:92.50px;height:10.10px;background:#e1e1e1;border:0.7px solid #b5b5b5;"></div>
<div class="t" style="left:145.29px;width:56.41px;text-align:center;top:113.00px;font-size:7.2px;line-height:10px;transform:scaleX(0.8223);transform-origin:50% 50%;color:#111;">История ИКС: 0</div>
<div class="r" style="left:127.20px;top:125.20px;width:92.50px;height:10.10px;background:#e1e1e1;border:0.7px solid #b5b5b5;"></div>
<div class="t" style="left:145.97px;width:55.06px;text-align:center;top:125.90px;font-size:7.2px;line-height:10px;transform:scaleX(0.8223);transform-origin:50% 50%;color:#111;">Видимость: 0%</div>
<div class="t" style="left:560.34px;width:66.72px;text-align:center;top:61.90px;font-size:7.0px;line-height:10px;transform:scaleX(0.8690);transform-origin:50% 50%;color:#222;">Дата сканирования</div>
<svg style="left:0;top:0" width="1024" height="300" viewBox="0 0 1024 300"><rect x="266.0" y="73.0" width="673.5" height="189.3" fill="#fff"/><line x1="267.5" y1="248.26" x2="939.0" y2="248.26" stroke="#dedede" stroke-width="0.9"/><line x1="267.5" y1="234.22" x2="939.0" y2="234.22" stroke="#dedede" stroke-width="0.9"/><line x1="267.5" y1="220.18" x2="939.0" y2="220.18" stroke="#dedede" stroke-width="0.9"/><line x1="267.5" y1="206.14" x2="939.0" y2="206.14" stroke="#dedede" stroke-width="0.9"/><line x1="267.5" y1="192.10" x2="939.0" y2="192.10" stroke="#dedede" stroke-width="0.9"/><line x1="267.5" y1="178.06" x2="939.0" y2="178.06" stroke="#dedede" stroke-width="0.9"/><line x1="267.5" y1="164.02" x2="939.0" y2="164.02" stroke="#dedede" stroke-width="0.9"/><line x1="267.5" y1="149.98" x2="939.0" y2="149.98" stroke="#dedede" stroke-width="0.9"/><line x1="267.5" y1="135.94" x2="939.0" y2="135.94" stroke="#dedede" stroke-width="0.9"/><line x1="267.5" y1="121.90" x2="939.0" y2="121.90" stroke="#dedede" stroke-width="0.9"/><line x1="267.5" y1="107.86" x2="939.0" y2="107.86" stroke="#dedede" stroke-width="0.9"/><line x1="267.5" y1="93.82" x2="939.0" y2="93.82" stroke="#dedede" stroke-width="0.9"/><line x1="267.5" y1="79.78" x2="939.0" y2="79.78" stroke="#dedede" stroke-width="0.9"/><line x1="263.8" y1="262.30" x2="265.8" y2="262.30" stroke="#777" stroke-width="0.6"/><line x1="263.8" y1="255.28" x2="265.8" y2="255.28" stroke="#777" stroke-width="0.6"/><line x1="263.8" y1="248.26" x2="265.8" y2="248.26" stroke="#777" stroke-width="0.6"/><line x1="263.8" y1="241.24" x2="265.8" y2="241.24" stroke="#777" stroke-width="0.6"/><line x1="263.8" y1="234.22" x2="265.8" y2="234.22" stroke="#777" stroke-width="0.6"/><line x1="263.8" y1="227.20" x2="265.8" y2="227.20" stroke="#777" stroke-width="0.6"/><line x1="263.8" y1="220.18" x2="265.8" y2="220.18" stroke="#777" stroke-width="0.6"/><line x1="263.8" y1="213.16" x2="265.8" y2="213.16" stroke="#777" stroke-width="0.6"/><line x1="263.8" y1="206.14" x2="265.8" y2="206.14" stroke="#777" stroke-width="0.6"/><line x1="263.8" y1="199.12" x2="265.8" y2="199.12" stroke="#777" stroke-width="0.6"/><line x1="263.8" y1="192.10" x2="265.8" y2="192.10" stroke="#777" stroke-width="0.6"/><line x1="263.8" y1="185.08" x2="265.8" y2="185.08" stroke="#777" stroke-width="0.6"/><line x1="263.8" y1="178.06" x2="265.8" y2="178.06" stroke="#777" stroke-width="0.6"/><line x1="263.8" y1="171.04" x2="265.8" y2="171.04" stroke="#777" stroke-width="0.6"/><line x1="263.8" y1="164.02" x2="265.8" y2="164.02" stroke="#777" stroke-width="0.6"/><line x1="263.8" y1="157.00" x2="265.8" y2="157.00" stroke="#777" stroke-width="0.6"/><line x1="263.8" y1="149.98" x2="265.8" y2="149.98" stroke="#777" stroke-width="0.6"/><line x1="263.8" y1="142.96" x2="265.8" y2="142.96" stroke="#777" stroke-width="0.6"/><line x1="263.8" y1="135.94" x2="265.8" y2="135.94" stroke="#777" stroke-width="0.6"/><line x1="263.8" y1="128.92" x2="265.8" y2="128.92" stroke="#777" stroke-width="0.6"/><line x1="263.8" y1="121.90" x2="265.8" y2="121.90" stroke="#777" stroke-width="0.6"/><line x1="263.8" y1="114.88" x2="265.8" y2="114.88" stroke="#777" stroke-width="0.6"/><line x1="263.8" y1="107.86" x2="265.8" y2="107.86" stroke="#777" stroke-width="0.6"/><line x1="263.8" y1="100.84" x2="265.8" y2="100.84" stroke="#777" stroke-width="0.6"/><line x1="263.8" y1="93.82" x2="265.8" y2="93.82" stroke="#777" stroke-width="0.6"/><line x1="263.8" y1="86.80" x2="265.8" y2="86.80" stroke="#777" stroke-width="0.6"/><line x1="263.8" y1="79.78" x2="265.8" y2="79.78" stroke="#777" stroke-width="0.6"/><line x1="267.96" y1="262.8" x2="267.96" y2="264.7" stroke="#777" stroke-width="0.6"/><line x1="279.30" y1="262.8" x2="279.30" y2="264.7" stroke="#777" stroke-width="0.6"/><line x1="290.64" y1="262.8" x2="290.64" y2="264.7" stroke="#777" stroke-width="0.6"/><line x1="301.98" y1="262.8" x2="301.98" y2="264.7" stroke="#777" stroke-width="0.6"/><line x1="313.32" y1="262.8" x2="313.32" y2="264.7" stroke="#777" stroke-width="0.6"/><line x1="324.66" y1="262.8" x2="324.66" y2="264.7" stroke="#777" stroke-width="0.6"/><line x1="336.00" y1="262.8" x2="336.00" y2="264.7" stroke="#777" stroke-width="0.6"/><line x1="347.34" y1="262.8" x2="347.34" y2="264.7" stroke="#777" stroke-width="0.6"/><line x1="358.68" y1="262.8" x2="358.68" y2="264.7" stroke="#777" stroke-width="0.6"/><line x1="370.02" y1="262.8" x2="370.02" y2="264.7" stroke="#777" stroke-width="0.6"/><line x1="381.36" y1="262.8" x2="381.36" y2="264.7" stroke="#777" stroke-width="0.6"/><line x1="392.70" y1="262.8" x2="392.70" y2="264.7" stroke="#777" stroke-width="0.6"/><line x1="404.04" y1="262.8" x2="404.04" y2="264.7" stroke="#777" stroke-width="0.6"/><line x1="415.38" y1="262.8" x2="415.38" y2="264.7" stroke="#777" stroke-width="0.6"/><line x1="426.72" y1="262.8" x2="426.72" y2="264.7" stroke="#777" stroke-width="0.6"/><line x1="438.06" y1="262.8" x2="438.06" y2="264.7" stroke="#777" stroke-width="0.6"/><line x1="449.40" y1="262.8" x2="449.40" y2="264.7" stroke="#777" stroke-width="0.6"/><line x1="460.74" y1="262.8" x2="460.74" y2="264.7" stroke="#777" stroke-width="0.6"/><line x1="472.08" y1="262.8" x2="472.08" y2="264.7" stroke="#777" stroke-width="0.6"/><line x1="483.42" y1="262.8" x2="483.42" y2="264.7" stroke="#777" stroke-width="0.6"/><line x1="494.76" y1="262.8" x2="494.76" y2="264.7" stroke="#777" stroke-width="0.6"/><line x1="506.10" y1="262.8" x2="506.10" y2="264.7" stroke="#777" stroke-width="0.6"/><line x1="517.44" y1="262.8" x2="517.44" y2="264.7" stroke="#777" stroke-width="0.6"/><line x1="528.78" y1="262.8" x2="528.78" y2="264.7" stroke="#777" stroke-width="0.6"/><line x1="540.12" y1="262.8" x2="540.12" y2="264.7" stroke="#777" stroke-width="0.6"/><line x1="551.46" y1="262.8" x2="551.46" y2="264.7" stroke="#777" stroke-width="0.6"/><line x1="562.80" y1="262.8" x2="562.80" y2="264.7" stroke="#777" stroke-width="0.6"/><line x1="574.14" y1="262.8" x2="574.14" y2="264.7" stroke="#777" stroke-width="0.6"/><line x1="585.48" y1="262.8" x2="585.48" y2="264.7" stroke="#777" stroke-width="0.6"/><line x1="596.82" y1="262.8" x2="596.82" y2="264.7" stroke="#777" stroke-width="0.6"/><line x1="608.16" y1="262.8" x2="608.16" y2="264.7" stroke="#777" stroke-width="0.6"/><line x1="619.50" y1="262.8" x2="619.50" y2="264.7" stroke="#777" stroke-width="0.6"/><line x1="630.84" y1="262.8" x2="630.84" y2="264.7" stroke="#777" stroke-width="0.6"/><line x1="642.18" y1="262.8" x2="642.18" y2="264.7" stroke="#777" stroke-width="0.6"/><line x1="653.52" y1="262.8" x2="653.52" y2="264.7" stroke="#777" stroke-width="0.6"/><line x1="664.86" y1="262.8" x2="664.86" y2="264.7" stroke="#777" stroke-width="0.6"/><line x1="676.20" y1="262.8" x2="676.20" y2="264.7" stroke="#777" stroke-width="0.6"/><line x1="687.54" y1="262.8" x2="687.54" y2="264.7" stroke="#777" stroke-width="0.6"/><line x1="698.88" y1="262.8" x2="698.88" y2="264.7" stroke="#777" stroke-width="0.6"/><line x1="710.22" y1="262.8" x2="710.22" y2="264.7" stroke="#777" stroke-width="0.6"/><line x1="721.56" y1="262.8" x2="721.56" y2="264.7" stroke="#777" stroke-width="0.6"/><line x1="732.90" y1="262.8" x2="732.90" y2="264.7" stroke="#777" stroke-width="0.6"/><line x1="744.24" y1="262.8" x2="744.24" y2="264.7" stroke="#777" stroke-width="0.6"/><line x1="755.58" y1="262.8" x2="755.58" y2="264.7" stroke="#777" stroke-width="0.6"/><line x1="766.92" y1="262.8" x2="766.92" y2="264.7" stroke="#777" stroke-width="0.6"/><line x1="778.26" y1="262.8" x2="778.26" y2="264.7" stroke="#777" stroke-width="0.6"/><line x1="789.60" y1="262.8" x2="789.60" y2="264.7" stroke="#777" stroke-width="0.6"/><line x1="800.94" y1="262.8" x2="800.94" y2="264.7" stroke="#777" stroke-width="0.6"/><line x1="812.28" y1="262.8" x2="812.28" y2="264.7" stroke="#777" stroke-width="0.6"/><line x1="823.62" y1="262.8" x2="823.62" y2="264.7" stroke="#777" stroke-width="0.6"/><line x1="834.96" y1="262.8" x2="834.96" y2="264.7" stroke="#777" stroke-width="0.6"/><line x1="846.30" y1="262.8" x2="846.30" y2="264.7" stroke="#777" stroke-width="0.6"/><line x1="857.64" y1="262.8" x2="857.64" y2="264.7" stroke="#777" stroke-width="0.6"/><line x1="868.98" y1="262.8" x2="868.98" y2="264.7" stroke="#777" stroke-width="0.6"/><line x1="880.32" y1="262.8" x2="880.32" y2="264.7" stroke="#777" stroke-width="0.6"/><line x1="891.66" y1="262.8" x2="891.66" y2="264.7" stroke="#777" stroke-width="0.6"/><line x1="903.00" y1="262.8" x2="903.00" y2="264.7" stroke="#777" stroke-width="0.6"/><line x1="914.34" y1="262.8" x2="914.34" y2="264.7" stroke="#777" stroke-width="0.6"/><line x1="925.68" y1="262.8" x2="925.68" y2="264.7" stroke="#777" stroke-width="0.6"/><line x1="937.02" y1="262.8" x2="937.02" y2="264.7" stroke="#777" stroke-width="0.6"/><line x1="266.0" y1="73.4" x2="939.5" y2="73.4" stroke="#8a8a8a" stroke-width="1"/><line x1="939.5" y1="73.0" x2="939.5" y2="262.3" stroke="#8a8a8a" stroke-width="0.9"/><line x1="265.65" y1="73.0" x2="265.65" y2="263.1" stroke="#111" stroke-width="1.4"/><line x1="266.0" y1="262.7" x2="939.5" y2="262.7" stroke="#333" stroke-width="1.2"/><polyline points="266.00,262.30 276.00,262.30 284.80,255.28 288.50,255.28 292.40,262.30 358.00,262.30 358.10,248.26 359.70,255.28 367.30,255.28 369.50,234.22 371.30,227.20 372.30,248.26 376.00,241.24 379.80,227.20 382.60,234.22 389.80,234.22 390.30,262.30 397.30,262.30 399.70,234.22 404.50,220.18 409.50,227.20 413.90,241.24 416.00,234.22 417.60,234.22 420.40,241.24 423.70,255.28 424.70,241.24 428.00,241.24 430.20,262.30 437.90,262.30 441.10,241.24 443.30,262.30 444.90,234.22 446.60,262.30 455.30,262.30 461.90,178.06 463.60,262.30 466.70,178.06 468.50,178.06 470.20,206.14 471.70,178.06 478.30,248.26 480.00,171.04 489.20,93.82 491.00,149.98 494.90,114.88 505.80,107.86 506.70,93.82 510.20,93.82 511.10,86.80 512.40,157.00 515.50,114.88 524.90,128.92 555.20,93.82 713.75,262.30 717.00,157.00 938.50,234.22" fill="none" stroke="#f4a03c" stroke-width="1.25" stroke-linejoin="round"/><polyline points="266.60,185.08 268.40,213.16 273.80,220.18 288.50,220.18 292.40,178.06 299.00,178.06 302.50,164.02 305.50,178.06 311.00,192.10 319.70,192.10 323.00,171.04 325.90,199.12 327.80,192.10 329.60,199.12 331.80,199.12 333.50,213.16 336.10,199.12 340.50,213.16 344.00,220.18 352.00,220.18 355.70,206.14 357.50,220.18 358.60,213.16 359.70,220.18 367.30,220.18 369.50,213.16 372.80,213.16 376.00,206.14 379.30,213.16 386.00,213.16 389.20,192.10 394.60,192.10 397.30,206.14 398.60,192.10 399.50,199.12 410.00,199.12 413.20,206.14 417.60,206.14 420.80,199.12 423.70,206.14 425.20,199.12 426.90,206.14 429.60,185.08 431.30,199.12 434.60,199.12 435.20,185.08 436.10,199.12 437.90,178.06 440.70,171.04 443.30,185.08 444.90,185.08 446.20,206.14 449.20,213.16 452.10,192.10 456.00,178.06 463.60,157.00 466.60,157.00 468.60,171.04 471.00,157.00 472.40,171.04 478.30,185.08 480.50,164.02 483.00,161.91 487.50,157.00 490.40,155.60 494.00,142.96 495.00,157.00 505.50,149.98 510.30,175.95 511.50,199.12 515.60,185.08 524.00,178.06 526.00,185.08 555.20,157.00 713.75,262.30 717.30,248.26 938.50,255.28" fill="none" stroke="#4a6db3" stroke-width="1.25" stroke-linejoin="round"/><polyline points="266.00,262.30 312.50,262.30 319.30,93.82 321.50,88.91 323.20,86.80 325.60,86.80 325.80,107.86 390.50,107.86 394.80,262.30 938.50,262.30" fill="none" stroke="#f0622f" stroke-width="1.4" stroke-linejoin="round"/></svg>
<div class="t" style="right:761.90px;top:258.50px;font-size:6.9px;line-height:10px;transform:scaleX(0.8600);transform-origin:100% 50%;color:#222;-webkit-text-stroke:0.12px #222;">0</div>
<div class="t" style="right:761.90px;top:244.46px;font-size:6.9px;line-height:10px;transform:scaleX(0.8600);transform-origin:100% 50%;color:#222;-webkit-text-stroke:0.12px #222;">2</div>
<div class="t" style="right:761.90px;top:230.42px;font-size:6.9px;line-height:10px;transform:scaleX(0.8600);transform-origin:100% 50%;color:#222;-webkit-text-stroke:0.12px #222;">4</div>
<div class="t" style="right:761.90px;top:216.38px;font-size:6.9px;line-height:10px;transform:scaleX(0.8600);transform-origin:100% 50%;color:#222;-webkit-text-stroke:0.12px #222;">6</div>
<div class="t" style="right:761.90px;top:202.34px;font-size:6.9px;line-height:10px;transform:scaleX(0.8600);transform-origin:100% 50%;color:#222;-webkit-text-stroke:0.12px #222;">8</div>
<div class="t" style="right:761.90px;top:188.30px;font-size:6.9px;line-height:10px;transform:scaleX(0.8600);transform-origin:100% 50%;color:#222;-webkit-text-stroke:0.12px #222;">10</div>
<div class="t" style="right:761.90px;top:174.26px;font-size:6.9px;line-height:10px;transform:scaleX(0.8600);transform-origin:100% 50%;color:#222;-webkit-text-stroke:0.12px #222;">12</div>
<div class="t" style="right:761.90px;top:160.22px;font-size:6.9px;line-height:10px;transform:scaleX(0.8600);transform-origin:100% 50%;color:#222;-webkit-text-stroke:0.12px #222;">14</div>
<div class="t" style="right:761.90px;top:146.18px;font-size:6.9px;line-height:10px;transform:scaleX(0.8600);transform-origin:100% 50%;color:#222;-webkit-text-stroke:0.12px #222;">16</div>
<div class="t" style="right:761.90px;top:132.14px;font-size:6.9px;line-height:10px;transform:scaleX(0.8600);transform-origin:100% 50%;color:#222;-webkit-text-stroke:0.12px #222;">18</div>
<div class="t" style="right:761.90px;top:118.10px;font-size:6.9px;line-height:10px;transform:scaleX(0.8600);transform-origin:100% 50%;color:#222;-webkit-text-stroke:0.12px #222;">20</div>
<div class="t" style="right:761.90px;top:104.06px;font-size:6.9px;line-height:10px;transform:scaleX(0.8600);transform-origin:100% 50%;color:#222;-webkit-text-stroke:0.12px #222;">22</div>
<div class="t" style="right:761.90px;top:90.02px;font-size:6.9px;line-height:10px;transform:scaleX(0.8600);transform-origin:100% 50%;color:#222;-webkit-text-stroke:0.12px #222;">24</div>
<div class="t" style="right:761.90px;top:75.98px;font-size:6.9px;line-height:10px;transform:scaleX(0.8600);transform-origin:100% 50%;color:#222;-webkit-text-stroke:0.12px #222;">26</div>
<div class="t" style="left:261.23px;width:38.53px;text-align:center;top:264.70px;font-size:6.9px;line-height:10px;transform:scaleX(0.8209);transform-origin:50% 50%;color:#222;-webkit-text-stroke:0.12px #222;">06.05.2013</div>
<div class="t" style="left:306.58px;width:38.53px;text-align:center;top:264.70px;font-size:6.9px;line-height:10px;transform:scaleX(0.8209);transform-origin:50% 50%;color:#222;-webkit-text-stroke:0.12px #222;">04.08.2013</div>
<div class="t" style="left:352.19px;width:38.02px;text-align:center;top:264.70px;font-size:6.9px;line-height:10px;transform:scaleX(0.8333);transform-origin:50% 50%;color:#222;-webkit-text-stroke:0.12px #222;">02.11.2013</div>
<div class="t" style="left:397.28px;width:38.53px;text-align:center;top:264.70px;font-size:6.9px;line-height:10px;transform:scaleX(0.8209);transform-origin:50% 50%;color:#222;-webkit-text-stroke:0.12px #222;">31.01.2014</div>
<div class="t" style="left:442.63px;width:38.53px;text-align:center;top:264.70px;font-size:6.9px;line-height:10px;transform:scaleX(0.8209);transform-origin:50% 50%;color:#222;-webkit-text-stroke:0.12px #222;">01.05.2014</div>
<div class="t" style="left:487.98px;width:38.53px;text-align:center;top:264.70px;font-size:6.9px;line-height:10px;transform:scaleX(0.8209);transform-origin:50% 50%;color:#222;-webkit-text-stroke:0.12px #222;">30.07.2014</div>
<div class="t" style="left:533.33px;width:38.53px;text-align:center;top:264.70px;font-size:6.9px;line-height:10px;transform:scaleX(0.8209);transform-origin:50% 50%;color:#222;-webkit-text-stroke:0.12px #222;">28.10.2014</div>
<div class="t" style="left:578.68px;width:38.53px;text-align:center;top:264.70px;font-size:6.9px;line-height:10px;transform:scaleX(0.8209);transform-origin:50% 50%;color:#222;-webkit-text-stroke:0.12px #222;">26.01.2015</div>
<div class="t" style="left:624.03px;width:38.53px;text-align:center;top:264.70px;font-size:6.9px;line-height:10px;transform:scaleX(0.8209);transform-origin:50% 50%;color:#222;-webkit-text-stroke:0.12px #222;">26.04.2015</div>
<div class="t" style="left:669.38px;width:38.53px;text-align:center;top:264.70px;font-size:6.9px;line-height:10px;transform:scaleX(0.8209);transform-origin:50% 50%;color:#222;-webkit-text-stroke:0.12px #222;">25.07.2015</div>
<div class="t" style="left:714.73px;width:38.53px;text-align:center;top:264.70px;font-size:6.9px;line-height:10px;transform:scaleX(0.8209);transform-origin:50% 50%;color:#222;-webkit-text-stroke:0.12px #222;">23.10.2015</div>
<div class="t" style="left:760.08px;width:38.53px;text-align:center;top:264.70px;font-size:6.9px;line-height:10px;transform:scaleX(0.8209);transform-origin:50% 50%;color:#222;-webkit-text-stroke:0.12px #222;">21.01.2016</div>
<div class="t" style="left:805.43px;width:38.53px;text-align:center;top:264.70px;font-size:6.9px;line-height:10px;transform:scaleX(0.8209);transform-origin:50% 50%;color:#222;-webkit-text-stroke:0.12px #222;">20.04.2016</div>
<div class="t" style="left:850.78px;width:38.53px;text-align:center;top:264.70px;font-size:6.9px;line-height:10px;transform:scaleX(0.8209);transform-origin:50% 50%;color:#222;-webkit-text-stroke:0.12px #222;">19.07.2016</div>
<div class="t" style="left:896.13px;width:38.53px;text-align:center;top:264.70px;font-size:6.9px;line-height:10px;transform:scaleX(0.8209);transform-origin:50% 50%;color:#222;-webkit-text-stroke:0.12px #222;">17.10.2016</div>
<div class="t" style="left:211.47px;top:161.00px;width:70.86px;text-align:center;font-size:7.2px;line-height:10px;color:#222;transform:rotate(-90deg) scaleX(0.8496);">Запросов в ТОП 1-10</div>
<div class="r" style="left:961.30px;top:84.80px;width:35.50px;height:25.50px;background:#9a9a9a;filter:blur(0.5px);"></div>
<div class="r" style="left:960.50px;top:84.00px;width:35.50px;height:25.50px;background:#fff;border:0.8px solid #777;"></div>
<div class="r" style="left:964.00px;top:88.30px;width:6.00px;height:1.40px;background:#6384c4;"></div>
<div class="t" style="left:972.80px;top:84.00px;font-size:7.0px;line-height:10px;transform:scaleX(0.8284);transform-origin:0 50%;color:#222;">Яндекс</div>
<div class="r" style="left:964.00px;top:95.80px;width:6.00px;height:1.40px;background:#f5a445;"></div>
<div class="t" style="left:972.80px;top:91.50px;font-size:7.0px;line-height:10px;transform:scaleX(0.8727);transform-origin:0 50%;color:#222;">Google</div>
<div class="r" style="left:964.00px;top:103.30px;width:6.00px;height:1.40px;background:#f26d48;"></div>
<div class="t" style="left:972.80px;top:99.00px;font-size:7.0px;line-height:10px;transform:scaleX(0.8765);transform-origin:0 50%;color:#222;">Mail</div>
<div class="r" style="left:547.00px;top:308.20px;width:53.50px;height:4.40px;background:linear-gradient(#fafafa,#e6e6e6);border:0.6px solid #b4b4b4;border-radius:0.6px;"></div>
<svg style="left:550.2px;top:309px" width="4" height="3" viewBox="0 0 8 6"><path d="M0.5 5 L4 1 L7.5 5 Z" fill="#2233aa"/></svg>
<svg style="left:593.8px;top:309px" width="4" height="3" viewBox="0 0 8 6"><path d="M0.5 5 L4 1 L7.5 5 Z" fill="#2233aa"/></svg>
<div class="r" style="left:126.40px;top:283.70px;width:100.20px;height:23.30px;background:#fff;border:0.8px solid #c8c8c8;border-radius:0.8px;"></div>
<div class="r" style="left:159.40px;top:284.00px;width:0.70px;height:22.80px;background:#d8d8d8;"></div>
<div class="r" style="left:192.20px;top:284.00px;width:0.70px;height:22.80px;background:#d8d8d8;"></div>
<div class="r" style="left:230.30px;top:283.70px;width:109.40px;height:23.30px;background:#fff;border:0.8px solid #c8c8c8;border-radius:0.8px;"></div>
<div class="r" style="left:282.60px;top:284.00px;width:0.70px;height:22.80px;background:#d8d8d8;"></div>
<div class="t" style="left:130.00px;top:285.30px;font-size:7.0px;line-height:10px;transform:scaleX(0.7646);transform-origin:0 50%;color:#333;">(0%)</div>
<div class="t" style="left:129.70px;top:293.60px;font-size:10.8px;line-height:12px;color:#111;letter-spacing:-0.95px;-webkit-text-stroke:0.25px #111;">1</div>
<div class="t" style="left:163.60px;top:285.30px;font-size:7.0px;line-height:10px;transform:scaleX(0.7765);transform-origin:0 50%;color:#333;">(77%)</div>
<div class="t" style="left:163.30px;top:293.60px;font-size:10.8px;line-height:12px;color:#111;letter-spacing:-0.95px;-webkit-text-stroke:0.25px #111;">140</div>
<div class="t" style="left:196.80px;top:285.30px;font-size:7.0px;line-height:10px;transform:scaleX(0.7605);transform-origin:0 50%;color:#333;">(22%)</div>
<div class="t" style="left:196.50px;top:293.60px;font-size:10.8px;line-height:12px;color:#111;letter-spacing:-0.95px;-webkit-text-stroke:0.25px #111;">40</div>
<div class="t" style="left:235.30px;top:285.30px;font-size:7.0px;line-height:10px;transform:scaleX(0.8292);transform-origin:0 50%;color:#333;">Средняя</div>
<div class="t" style="left:235.00px;top:293.60px;font-size:10.8px;line-height:12px;color:#111;letter-spacing:-0.95px;-webkit-text-stroke:0.25px #111;">0%</div>
<div class="t" style="left:287.80px;top:285.30px;font-size:7.0px;line-height:10px;transform:scaleX(0.8532);transform-origin:0 50%;color:#333;">Видимость</div>
<div class="t" style="left:287.50px;top:293.60px;font-size:10.8px;line-height:12px;color:#111;letter-spacing:-0.95px;-webkit-text-stroke:0.25px #111;">0%</div>
<svg style="left:150.2px;top:296.4px" width="5.4" height="6.2" viewBox="0 0 10 12"><path d="M5 0.3 L9.8 5.6 H7 V11.6 H3 V5.6 H0.2 Z" fill="#84c83a"/></svg>
<div class="r" style="left:182.10px;top:297.20px;width:6.90px;height:1.80px;background:#a8a8a8;border-radius:0.6px;"></div>
<div class="r" style="left:182.10px;top:300.00px;width:6.90px;height:1.80px;background:#a8a8a8;border-radius:0.6px;"></div>
<svg style="left:216.0px;top:296.4px" width="5.4" height="6.2" viewBox="0 0 10 12"><path d="M5 11.7 L9.8 6.4 H7 V0.4 H3 V6.4 H0.2 Z" fill="#ee3a24"/></svg>
<div class="t" style="left:128.60px;top:316.40px;font-size:7.2px;line-height:10px;transform:scaleX(0.8078);transform-origin:0 50%;color:#222;">Запросы (181 из 181)</div>
<div class="r" style="left:191.10px;top:315.80px;width:77.00px;height:11.00px;background:#e5e5e5;border:0.7px solid #adadad;"></div>
<div class="t" style="left:192.50px;top:316.60px;font-size:7.3px;line-height:10px;transform:scaleX(0.8745);transform-origin:0 50%;color:#111;">Все</div>
<svg style="left:261.8px;top:320px" width="4" height="2.5" viewBox="0 0 8 5"><path d="M0.5 0.5 L4 4 L7.5 0.5" fill="none" stroke="#555" stroke-width="1"/></svg>
<div class="r" style="left:274.50px;top:315.50px;width:206.00px;height:11.50px;background:#f0f0f0;border:0.6px solid #dcdcdc;"></div>
<svg style="left:277.6px;top:319.4px" width="2.6" height="4" viewBox="0 0 5 8"><path d="M4.2 0.8 L1.2 4 L4.2 7.2" fill="none" stroke="#333" stroke-width="1.7"/></svg>
<div class="r" style="left:284.30px;top:317.00px;width:8.70px;height:8.50px;background:#cdcdcd;"></div>
<svg style="left:474.6px;top:319.4px" width="2.6" height="4" viewBox="0 0 5 8"><path d="M0.8 0.8 L3.8 4 L0.8 7.2" fill="none" stroke="#333" stroke-width="1.7"/></svg>
<div class="t" style="left:850.50px;top:316.40px;font-size:7.2px;line-height:10px;transform:scaleX(0.8255);transform-origin:0 50%;color:#111;">Фильтр по запросу:</div>
<div class="r" style="left:909.50px;top:316.25px;width:109.75px;height:10.50px;background:#fff;border:0.7px solid #8a8a8a;"></div>
<div class="t" style="left:911.30px;top:316.50px;font-size:7.0px;line-height:10px;transform:scaleX(0.8253);transform-origin:0 50%;color:#7a7a7a;">Введите фразу для поиска...</div>
<svg style="left:1012.2px;top:319.4px" width="4.4" height="4.4" viewBox="0 0 9 9"><path d="M0.5 0.5 L8.5 8.5 M8.5 0.5 L0.5 8.5" stroke="#444" stroke-width="1.1"/></svg>
<div class="r" style="left:125.80px;top:330.60px;width:894.20px;height:157.40px;background:#fff;border-top:0.7px solid #dedede;"></div>
<div class="r" style="left:482.50px;top:343.00px;width:71.75px;height:145.00px;background:#eef6fd;"></div>
<div class="r" style="left:276.70px;top:333.00px;width:0.70px;height:10.00px;background:#ececec;"></div>
<div class="r" style="left:317.95px;top:333.00px;width:0.70px;height:10.00px;background:#ececec;"></div>
<div class="r" style="left:359.20px;top:333.00px;width:0.70px;height:10.00px;background:#ececec;"></div>
<div class="r" style="left:400.20px;top:333.00px;width:0.70px;height:10.00px;background:#ececec;"></div>
<div class="r" style="left:440.95px;top:333.00px;width:0.70px;height:10.00px;background:#ececec;"></div>
<div class="r" style="left:482.20px;top:333.00px;width:0.70px;height:10.00px;background:#ececec;"></div>
<div class="r" style="left:517.95px;top:333.00px;width:0.70px;height:10.00px;background:#ececec;"></div>
<div class="r" style="left:553.95px;top:333.00px;width:0.70px;height:10.00px;background:#ececec;"></div>
<div class="r" style="left:592.20px;top:333.00px;width:0.70px;height:10.00px;background:#ececec;"></div>
<div class="r" style="left:628.45px;top:333.00px;width:0.70px;height:10.00px;background:#ececec;"></div>
<div class="r" style="left:738.45px;top:333.00px;width:0.70px;height:10.00px;background:#ececec;"></div>
<div class="t" style="left:131.75px;top:333.10px;font-size:7.2px;line-height:10px;transform:scaleX(0.8200);transform-origin:0 50%;color:#222;">Запрос</div>
<div class="t" style="left:286.92px;width:22.02px;text-align:center;top:333.10px;font-size:7.2px;line-height:10px;transform:scaleX(0.8200);transform-origin:50% 50%;color:#222;">03.12</div>
<div class="t" style="left:328.17px;width:22.02px;text-align:center;top:333.10px;font-size:7.2px;line-height:10px;transform:scaleX(0.8200);transform-origin:50% 50%;color:#222;">22.09</div>
<div class="t" style="left:369.29px;width:22.02px;text-align:center;top:333.10px;font-size:7.2px;line-height:10px;transform:scaleX(0.8200);transform-origin:50% 50%;color:#222;">17.09</div>
<div class="t" style="left:410.43px;width:21.48px;text-align:center;top:333.10px;font-size:7.2px;line-height:10px;transform:scaleX(0.8200);transform-origin:50% 50%;color:#222;">05.11</div>
<div class="t" style="left:451.17px;width:22.02px;text-align:center;top:333.10px;font-size:7.2px;line-height:10px;transform:scaleX(0.8200);transform-origin:50% 50%;color:#222;">08.09</div>
<div class="t" style="left:485.76px;width:29.84px;text-align:center;top:333.10px;font-size:7.2px;line-height:10px;transform:scaleX(0.8200);transform-origin:50% 50%;color:#222;">Лучшая</div>
<div class="t" style="left:521.61px;width:29.89px;text-align:center;top:333.10px;font-size:7.2px;line-height:10px;transform:scaleX(0.8200);transform-origin:50% 50%;color:#222;">Худшая</div>
<div class="t" style="left:565.88px;width:15.60px;text-align:center;top:333.10px;font-size:7.2px;line-height:10px;transform:scaleX(0.8200);transform-origin:50% 50%;color:#222;">WS</div>
<div class="t" style="left:599.57px;width:22.71px;text-align:center;top:333.10px;font-size:7.2px;line-height:10px;transform:scaleX(0.8200);transform-origin:50% 50%;color:#222;">"!WS"</div>
<div class="t" style="left:652.97px;width:62.16px;text-align:center;top:333.10px;font-size:7.2px;line-height:10px;transform:scaleX(0.8200);transform-origin:50% 50%;color:#222;">Посадочный URL</div>
<div class="r" style="left:130.70px;top:345.40px;width:5.20px;height:5.20px;background:#f7f7f7;border:0.7px solid #c9c9c9;border-radius:0.8px;"></div>
<div class="r" style="left:132.30px;top:347.70px;width:2.00px;height:0.70px;background:#4a6ad0;"></div>
<svg style="left:139.3px;top:344.50px" width="8.4" height="7.6" viewBox="0 0 17 15"><path d="M1 1.5 H7 L9 3.5 H16 V14 H1 Z" fill="#e9b71a"/><path d="M1.5 4.5 H15.5 V13.5 H1.5 Z" fill="#fbd54e"/></svg>
<div class="t" style="left:151.50px;top:343.10px;font-size:7.3px;line-height:10px;transform:scaleX(0.8200);transform-origin:0 50%;color:#1a1a1a;-webkit-text-stroke:0.1px #1a1a1a;">коттедж [6]</div>
<div class="r" style="left:130.70px;top:355.00px;width:5.20px;height:5.20px;background:#f7f7f7;border:0.7px solid #c9c9c9;border-radius:0.8px;"></div>
<div class="r" style="left:132.30px;top:357.30px;width:2.00px;height:0.70px;background:#4a6ad0;"></div>
<svg style="left:139.3px;top:354.10px" width="8.4" height="7.6" viewBox="0 0 17 15"><path d="M1 1.5 H7 L9 3.5 H16 V14 H1 Z" fill="#e9b71a"/><path d="M1.5 4.5 H15.5 V13.5 H1.5 Z" fill="#fbd54e"/></svg>
<div class="t" style="left:151.50px;top:352.70px;font-size:7.3px;line-height:10px;transform:scaleX(0.8200);transform-origin:0 50%;color:#1a1a1a;-webkit-text-stroke:0.1px #1a1a1a;">форум [2]</div>
<div class="r" style="left:130.70px;top:364.60px;width:5.20px;height:5.20px;background:#f7f7f7;border:0.7px solid #c9c9c9;border-radius:0.8px;"></div>
<div class="r" style="left:132.30px;top:366.90px;width:2.00px;height:0.70px;background:#4a6ad0;"></div>
<svg style="left:139.3px;top:363.70px" width="8.4" height="7.6" viewBox="0 0 17 15"><path d="M1 1.5 H7 L9 3.5 H16 V14 H1 Z" fill="#e9b71a"/><path d="M1.5 4.5 H15.5 V13.5 H1.5 Z" fill="#fbd54e"/></svg>
<div class="t" style="left:151.50px;top:362.30px;font-size:7.3px;line-height:10px;transform:scaleX(0.8200);transform-origin:0 50%;color:#1a1a1a;-webkit-text-stroke:0.1px #1a1a1a;">металлопластиковые окна [12]</div>
<div class="r" style="left:130.70px;top:374.20px;width:5.20px;height:5.20px;background:#f7f7f7;border:0.7px solid #c9c9c9;border-radius:0.8px;"></div>
<div class="r" style="left:132.30px;top:376.50px;width:2.00px;height:0.70px;background:#4a6ad0;"></div>
<svg style="left:139.3px;top:373.30px" width="8.4" height="7.6" viewBox="0 0 17 15"><path d="M1 1.5 H7 L9 3.5 H16 V14 H1 Z" fill="#e9b71a"/><path d="M1.5 4.5 H15.5 V13.5 H1.5 Z" fill="#fbd54e"/></svg>
<div class="t" style="left:151.50px;top:371.90px;font-size:7.3px;line-height:10px;transform:scaleX(0.8200);transform-origin:0 50%;color:#1a1a1a;-webkit-text-stroke:0.1px #1a1a1a;">готовые окна [16]</div>
<div class="r" style="left:133.5px;top:379.70px;width:0;height:109.60px;border-left:0.7px solid #dcdcdc;"></div>
<div class="r" style="left:134px;top:386.00px;width:5px;height:0;border-top:0.7px solid #dcdcdc;"></div>
<svg style="left:140px;top:382.30px" width="7.5" height="8" viewBox="0 0 15 16"><rect x="0.5" y="0.5" width="14" height="15" fill="#fff" stroke="#cfcfcf" stroke-width="0.8"/><path d="M3 14 L7.5 2.5 L12 14 M5 9.5 H10" stroke="#333" stroke-width="1.3" fill="none"/><path d="M2.5 13 L6 6" stroke="#e8a21a" stroke-width="1.6"/></svg>
<div class="t" style="left:151.50px;top:381.50px;font-size:7.3px;line-height:10px;transform:scaleX(0.8200);transform-origin:0 50%;color:#1a1a1a;-webkit-text-stroke:0.1px #1a1a1a;">veka окна пвх</div>
<div class="t" style="right:705.95px;top:381.40px;font-size:7.1px;line-height:10px;transform:scaleX(0.8350);transform-origin:100% 50%;color:#222;">&gt; 100</div>
<div class="t" style="right:664.70px;top:381.40px;font-size:7.1px;line-height:10px;transform:scaleX(0.8350);transform-origin:100% 50%;color:#222;">&gt; 100</div>
<div class="t" style="right:624.00px;top:381.40px;font-size:7.1px;line-height:10px;transform:scaleX(0.9524);transform-origin:100% 50%;color:#222;">n/a</div>
<div class="t" style="right:582.95px;top:381.40px;font-size:7.1px;line-height:10px;transform:scaleX(0.8350);transform-origin:100% 50%;color:#222;">&gt; 100</div>
<div class="t" style="right:541.70px;top:381.40px;font-size:7.1px;line-height:10px;transform:scaleX(0.8350);transform-origin:100% 50%;color:#222;">&gt; 100</div>
<div class="t" style="right:508.95px;top:381.40px;font-size:7.1px;line-height:10px;transform:scaleX(0.8300);transform-origin:100% 50%;color:#3a76c2;">75</div>
<div class="t" style="right:470.05px;top:381.40px;font-size:7.1px;line-height:10px;transform:scaleX(0.9524);transform-origin:100% 50%;color:#222;">n/a</div>
<div class="t" style="right:433.10px;top:381.40px;font-size:7.1px;line-height:10px;transform:scaleX(0.9524);transform-origin:100% 50%;color:#222;">n/a</div>
<div class="t" style="right:396.45px;top:381.40px;font-size:7.1px;line-height:10px;transform:scaleX(0.9524);transform-origin:100% 50%;color:#222;">n/a</div>
<div class="t" style="left:634.50px;top:381.40px;font-size:7.1px;line-height:10px;transform:scaleX(0.9726);transform-origin:0 50%;color:#222;">n/a</div>
<div class="r" style="left:134px;top:395.60px;width:5px;height:0;border-top:0.7px solid #dcdcdc;"></div>
<svg style="left:140px;top:391.90px" width="7.5" height="8" viewBox="0 0 15 16"><rect x="0.5" y="0.5" width="14" height="15" fill="#fff" stroke="#cfcfcf" stroke-width="0.8"/><path d="M3 14 L7.5 2.5 L12 14 M5 9.5 H10" stroke="#333" stroke-width="1.3" fill="none"/><path d="M2.5 13 L6 6" stroke="#e8a21a" stroke-width="1.6"/></svg>
<div class="t" style="left:151.50px;top:391.10px;font-size:7.3px;line-height:10px;transform:scaleX(0.8200);transform-origin:0 50%;color:#1a1a1a;-webkit-text-stroke:0.1px #1a1a1a;">whs halo</div>
<div class="t" style="right:708.35px;top:391.10px;font-size:7.8px;line-height:10px;font-weight:bold;transform:scaleX(0.8500);transform-origin:100% 50%;color:#1a8a1a;">4</div>
<div class="t" style="right:716.84px;top:391.00px;font-size:7.1px;line-height:10px;transform:scaleX(0.8300);transform-origin:100% 50%;color:#3aa53a;">(+3)</div>
<div class="t" style="right:667.30px;top:391.00px;font-size:7.1px;line-height:10px;transform:scaleX(0.8300);transform-origin:100% 50%;color:#222;">7</div>
<div class="t" style="right:624.00px;top:391.00px;font-size:7.1px;line-height:10px;transform:scaleX(0.9524);transform-origin:100% 50%;color:#222;">n/a</div>
<div class="t" style="right:585.55px;top:391.00px;font-size:7.1px;line-height:10px;transform:scaleX(0.8300);transform-origin:100% 50%;color:#111;">3</div>
<div class="t" style="right:590.43px;top:391.00px;font-size:7.1px;line-height:10px;transform:scaleX(0.8300);transform-origin:100% 50%;color:#3aa53a;">(+2)</div>
<div class="t" style="right:544.30px;top:391.00px;font-size:7.1px;line-height:10px;transform:scaleX(0.8300);transform-origin:100% 50%;color:#222;">5</div>
<div class="t" style="right:508.95px;top:391.00px;font-size:7.1px;line-height:10px;transform:scaleX(0.8300);transform-origin:100% 50%;color:#3a76c2;">3</div>
<div class="t" style="right:472.15px;top:391.00px;font-size:7.1px;line-height:10px;transform:scaleX(0.8300);transform-origin:100% 50%;color:#3a76c2;">9</div>
<div class="t" style="right:433.10px;top:391.00px;font-size:7.1px;line-height:10px;transform:scaleX(0.9524);transform-origin:100% 50%;color:#222;">n/a</div>
<div class="t" style="right:396.45px;top:391.00px;font-size:7.1px;line-height:10px;transform:scaleX(0.9524);transform-origin:100% 50%;color:#222;">n/a</div>
<div class="t" style="left:634.50px;top:391.00px;font-size:7.1px;line-height:10px;transform:scaleX(0.9726);transform-origin:0 50%;color:#222;">n/a</div>
<div class="r" style="left:134px;top:405.20px;width:5px;height:0;border-top:0.7px solid #dcdcdc;"></div>
<svg style="left:140px;top:401.50px" width="7.5" height="8" viewBox="0 0 15 16"><rect x="0.5" y="0.5" width="14" height="15" fill="#fff" stroke="#cfcfcf" stroke-width="0.8"/><path d="M3 14 L7.5 2.5 L12 14 M5 9.5 H10" stroke="#333" stroke-width="1.3" fill="none"/><path d="M2.5 13 L6 6" stroke="#e8a21a" stroke-width="1.6"/></svg>
<div class="t" style="left:151.50px;top:400.70px;font-size:7.3px;line-height:10px;transform:scaleX(0.8200);transform-origin:0 50%;color:#1a1a1a;-webkit-text-stroke:0.1px #1a1a1a;">где купить пластиковые окна</div>
<div class="t" style="right:705.95px;top:400.60px;font-size:7.1px;line-height:10px;transform:scaleX(0.8350);transform-origin:100% 50%;color:#222;">&gt; 100</div>
<div class="t" style="right:664.70px;top:400.60px;font-size:7.1px;line-height:10px;transform:scaleX(0.8350);transform-origin:100% 50%;color:#222;">&gt; 100</div>
<div class="t" style="right:624.00px;top:400.60px;font-size:7.1px;line-height:10px;transform:scaleX(0.9524);transform-origin:100% 50%;color:#222;">n/a</div>
<div class="t" style="right:582.95px;top:400.60px;font-size:7.1px;line-height:10px;transform:scaleX(0.8350);transform-origin:100% 50%;color:#222;">&gt; 100</div>
<div class="t" style="right:544.30px;top:400.60px;font-size:7.1px;line-height:10px;transform:scaleX(0.8300);transform-origin:100% 50%;color:#111;">33</div>
<div class="t" style="right:552.45px;top:400.60px;font-size:7.1px;line-height:10px;transform:scaleX(0.8300);transform-origin:100% 50%;color:#3aa53a;">(+4)</div>
<div class="t" style="right:508.95px;top:400.60px;font-size:7.1px;line-height:10px;transform:scaleX(0.8300);transform-origin:100% 50%;color:#3a76c2;">14</div>
<div class="t" style="right:472.15px;top:400.60px;font-size:7.1px;line-height:10px;transform:scaleX(0.8300);transform-origin:100% 50%;color:#3a76c2;">73</div>
<div class="t" style="right:433.10px;top:400.60px;font-size:7.1px;line-height:10px;transform:scaleX(0.9524);transform-origin:100% 50%;color:#222;">n/a</div>
<div class="t" style="right:396.45px;top:400.60px;font-size:7.1px;line-height:10px;transform:scaleX(0.9524);transform-origin:100% 50%;color:#222;">n/a</div>
<div class="t" style="left:634.50px;top:400.60px;font-size:7.1px;line-height:10px;transform:scaleX(0.9726);transform-origin:0 50%;color:#222;">n/a</div>
<div class="r" style="left:134px;top:414.80px;width:5px;height:0;border-top:0.7px solid #dcdcdc;"></div>
<svg style="left:140px;top:411.10px" width="7.5" height="8" viewBox="0 0 15 16"><rect x="0.5" y="0.5" width="14" height="15" fill="#fff" stroke="#cfcfcf" stroke-width="0.8"/><path d="M3 14 L7.5 2.5 L12 14 M5 9.5 H10" stroke="#333" stroke-width="1.3" fill="none"/><path d="M2.5 13 L6 6" stroke="#e8a21a" stroke-width="1.6"/></svg>
<div class="t" style="left:151.50px;top:410.30px;font-size:7.3px;line-height:10px;transform:scaleX(0.8200);transform-origin:0 50%;color:#1a1a1a;-webkit-text-stroke:0.1px #1a1a1a;">демонтаж пластиковых окон</div>
<div class="t" style="right:708.35px;top:410.30px;font-size:7.8px;line-height:10px;font-weight:bold;transform:scaleX(0.8500);transform-origin:100% 50%;color:#111;">98</div>
<div class="t" style="right:720.52px;top:410.20px;font-size:7.1px;line-height:10px;transform:scaleX(0.8300);transform-origin:100% 50%;color:#f05050;">(-83)</div>
<div class="t" style="right:667.30px;top:410.20px;font-size:7.1px;line-height:10px;transform:scaleX(0.8300);transform-origin:100% 50%;color:#222;">15</div>
<div class="t" style="right:624.00px;top:410.20px;font-size:7.1px;line-height:10px;transform:scaleX(0.9524);transform-origin:100% 50%;color:#222;">n/a</div>
<div class="t" style="right:585.55px;top:410.20px;font-size:7.1px;line-height:10px;transform:scaleX(0.8300);transform-origin:100% 50%;color:#111;">1</div>
<div class="t" style="right:590.43px;top:410.20px;font-size:7.1px;line-height:10px;transform:scaleX(0.8300);transform-origin:100% 50%;color:#3aa53a;">(+4)</div>
<div class="t" style="right:544.30px;top:410.20px;font-size:7.1px;line-height:10px;transform:scaleX(0.8300);transform-origin:100% 50%;color:#222;">5</div>
<div class="t" style="right:508.95px;top:410.20px;font-size:7.1px;line-height:10px;transform:scaleX(0.8300);transform-origin:100% 50%;color:#3a76c2;">1</div>
<div class="t" style="right:472.15px;top:410.20px;font-size:7.1px;line-height:10px;transform:scaleX(0.8300);transform-origin:100% 50%;color:#3a76c2;">16</div>
<div class="t" style="right:433.10px;top:410.20px;font-size:7.1px;line-height:10px;transform:scaleX(0.9524);transform-origin:100% 50%;color:#222;">n/a</div>
<div class="t" style="right:396.45px;top:410.20px;font-size:7.1px;line-height:10px;transform:scaleX(0.9524);transform-origin:100% 50%;color:#222;">n/a</div>
<div class="t" style="left:634.50px;top:410.20px;font-size:7.1px;line-height:10px;transform:scaleX(0.8198);transform-origin:0 50%;color:#2040e0;text-decoration:underline;">/uslugi/demontaj.html</div>
<div class="r" style="left:134px;top:424.40px;width:5px;height:0;border-top:0.7px solid #dcdcdc;"></div>
<svg style="left:140px;top:420.70px" width="7.5" height="8" viewBox="0 0 15 16"><rect x="0.5" y="0.5" width="14" height="15" fill="#fff" stroke="#cfcfcf" stroke-width="0.8"/><path d="M3 14 L7.5 2.5 L12 14 M5 9.5 H10" stroke="#333" stroke-width="1.3" fill="none"/><path d="M2.5 13 L6 6" stroke="#e8a21a" stroke-width="1.6"/></svg>
<div class="t" style="left:151.50px;top:419.90px;font-size:7.3px;line-height:10px;transform:scaleX(0.8200);transform-origin:0 50%;color:#1a1a1a;-webkit-text-stroke:0.1px #1a1a1a;">заказать окна пвх</div>
<div class="t" style="right:705.95px;top:419.80px;font-size:7.1px;line-height:10px;transform:scaleX(0.8350);transform-origin:100% 50%;color:#222;">&gt; 100</div>
<div class="t" style="right:664.70px;top:419.80px;font-size:7.1px;line-height:10px;transform:scaleX(0.8350);transform-origin:100% 50%;color:#222;">&gt; 100</div>
<div class="t" style="right:624.00px;top:419.80px;font-size:7.1px;line-height:10px;transform:scaleX(0.9524);transform-origin:100% 50%;color:#222;">n/a</div>
<div class="t" style="right:582.95px;top:419.80px;font-size:7.1px;line-height:10px;transform:scaleX(0.8350);transform-origin:100% 50%;color:#222;">&gt; 100</div>
<div class="t" style="right:541.70px;top:419.80px;font-size:7.1px;line-height:10px;transform:scaleX(0.8350);transform-origin:100% 50%;color:#222;">&gt; 100</div>
<div class="t" style="right:508.95px;top:419.80px;font-size:7.1px;line-height:10px;transform:scaleX(0.8300);transform-origin:100% 50%;color:#3a76c2;">81</div>
<div class="t" style="right:470.05px;top:419.80px;font-size:7.1px;line-height:10px;transform:scaleX(0.9524);transform-origin:100% 50%;color:#222;">n/a</div>
<div class="t" style="right:433.10px;top:419.80px;font-size:7.1px;line-height:10px;transform:scaleX(0.9524);transform-origin:100% 50%;color:#222;">n/a</div>
<div class="t" style="right:396.45px;top:419.80px;font-size:7.1px;line-height:10px;transform:scaleX(0.9524);transform-origin:100% 50%;color:#222;">n/a</div>
<div class="t" style="left:634.50px;top:419.80px;font-size:7.1px;line-height:10px;transform:scaleX(0.9726);transform-origin:0 50%;color:#222;">n/a</div>
<div class="r" style="left:134px;top:434.00px;width:5px;height:0;border-top:0.7px solid #dcdcdc;"></div>
<svg style="left:140px;top:430.30px" width="7.5" height="8" viewBox="0 0 15 16"><rect x="0.5" y="0.5" width="14" height="15" fill="#fff" stroke="#cfcfcf" stroke-width="0.8"/><path d="M3 14 L7.5 2.5 L12 14 M5 9.5 H10" stroke="#333" stroke-width="1.3" fill="none"/><path d="M2.5 13 L6 6" stroke="#e8a21a" stroke-width="1.6"/></svg>
<div class="t" style="left:151.50px;top:429.50px;font-size:7.3px;line-height:10px;transform:scaleX(0.8200);transform-origin:0 50%;color:#1a1a1a;-webkit-text-stroke:0.1px #1a1a1a;">заказать окна пвх в москве</div>
<div class="t" style="right:705.95px;top:429.40px;font-size:7.1px;line-height:10px;transform:scaleX(0.8350);transform-origin:100% 50%;color:#222;">&gt; 100</div>
<div class="t" style="right:667.30px;top:429.40px;font-size:7.1px;line-height:10px;transform:scaleX(0.8300);transform-origin:100% 50%;color:#222;">19</div>
<div class="t" style="right:624.00px;top:429.40px;font-size:7.1px;line-height:10px;transform:scaleX(0.9524);transform-origin:100% 50%;color:#222;">n/a</div>
<div class="t" style="right:585.55px;top:429.40px;font-size:7.1px;line-height:10px;transform:scaleX(0.8300);transform-origin:100% 50%;color:#222;">100</div>
<div class="t" style="right:541.70px;top:429.40px;font-size:7.1px;line-height:10px;transform:scaleX(0.8350);transform-origin:100% 50%;color:#222;">&gt; 100</div>
<div class="t" style="right:508.95px;top:429.40px;font-size:7.1px;line-height:10px;transform:scaleX(0.8300);transform-origin:100% 50%;color:#3a76c2;">19</div>
<div class="t" style="right:472.15px;top:429.40px;font-size:7.1px;line-height:10px;transform:scaleX(0.8300);transform-origin:100% 50%;color:#3a76c2;">100</div>
<div class="t" style="right:433.10px;top:429.40px;font-size:7.1px;line-height:10px;transform:scaleX(0.9524);transform-origin:100% 50%;color:#222;">n/a</div>
<div class="t" style="right:396.45px;top:429.40px;font-size:7.1px;line-height:10px;transform:scaleX(0.9524);transform-origin:100% 50%;color:#222;">n/a</div>
<div class="t" style="left:634.50px;top:429.40px;font-size:7.1px;line-height:10px;transform:scaleX(0.9726);transform-origin:0 50%;color:#222;">n/a</div>
<div class="r" style="left:134px;top:443.60px;width:5px;height:0;border-top:0.7px solid #dcdcdc;"></div>
<svg style="left:140px;top:439.90px" width="7.5" height="8" viewBox="0 0 15 16"><rect x="0.5" y="0.5" width="14" height="15" fill="#fff" stroke="#cfcfcf" stroke-width="0.8"/><path d="M3 14 L7.5 2.5 L12 14 M5 9.5 H10" stroke="#333" stroke-width="1.3" fill="none"/><path d="M2.5 13 L6 6" stroke="#e8a21a" stroke-width="1.6"/></svg>
<div class="t" style="left:151.50px;top:439.10px;font-size:7.3px;line-height:10px;transform:scaleX(0.8200);transform-origin:0 50%;color:#1a1a1a;-webkit-text-stroke:0.1px #1a1a1a;">заказать окна пвх цена</div>
<div class="t" style="right:705.95px;top:439.00px;font-size:7.1px;line-height:10px;transform:scaleX(0.8350);transform-origin:100% 50%;color:#222;">&gt; 100</div>
<div class="t" style="right:664.70px;top:439.00px;font-size:7.1px;line-height:10px;transform:scaleX(0.8350);transform-origin:100% 50%;color:#222;">&gt; 100</div>
<div class="t" style="right:624.00px;top:439.00px;font-size:7.1px;line-height:10px;transform:scaleX(0.9524);transform-origin:100% 50%;color:#222;">n/a</div>
<div class="t" style="right:582.95px;top:439.00px;font-size:7.1px;line-height:10px;transform:scaleX(0.8350);transform-origin:100% 50%;color:#222;">&gt; 100</div>
<div class="t" style="right:544.30px;top:439.00px;font-size:7.1px;line-height:10px;transform:scaleX(0.8300);transform-origin:100% 50%;color:#111;">91</div>
<div class="t" style="right:552.45px;top:439.00px;font-size:7.1px;line-height:10px;transform:scaleX(0.8300);transform-origin:100% 50%;color:#3aa53a;">(+2)</div>
<div class="t" style="right:508.95px;top:439.00px;font-size:7.1px;line-height:10px;transform:scaleX(0.8300);transform-origin:100% 50%;color:#3a76c2;">49</div>
<div class="t" style="right:470.05px;top:439.00px;font-size:7.1px;line-height:10px;transform:scaleX(0.9524);transform-origin:100% 50%;color:#222;">n/a</div>
<div class="t" style="right:433.10px;top:439.00px;font-size:7.1px;line-height:10px;transform:scaleX(0.9524);transform-origin:100% 50%;color:#222;">n/a</div>
<div class="t" style="right:396.45px;top:439.00px;font-size:7.1px;line-height:10px;transform:scaleX(0.9524);transform-origin:100% 50%;color:#222;">n/a</div>
<div class="t" style="left:634.50px;top:439.00px;font-size:7.1px;line-height:10px;transform:scaleX(0.9726);transform-origin:0 50%;color:#222;">n/a</div>
<div class="r" style="left:134px;top:453.20px;width:5px;height:0;border-top:0.7px solid #dcdcdc;"></div>
<svg style="left:140px;top:449.50px" width="7.5" height="8" viewBox="0 0 15 16"><rect x="0.5" y="0.5" width="14" height="15" fill="#fff" stroke="#cfcfcf" stroke-width="0.8"/><path d="M3 14 L7.5 2.5 L12 14 M5 9.5 H10" stroke="#333" stroke-width="1.3" fill="none"/><path d="M2.5 13 L6 6" stroke="#e8a21a" stroke-width="1.6"/></svg>
<div class="t" style="left:151.50px;top:448.70px;font-size:7.3px;line-height:10px;transform:scaleX(0.8200);transform-origin:0 50%;color:#1a1a1a;-webkit-text-stroke:0.1px #1a1a1a;">заказать остекление балкона</div>
<div class="t" style="right:705.95px;top:448.60px;font-size:7.1px;line-height:10px;transform:scaleX(0.8350);transform-origin:100% 50%;color:#222;">&gt; 100</div>
<div class="t" style="right:664.70px;top:448.60px;font-size:7.1px;line-height:10px;transform:scaleX(0.8350);transform-origin:100% 50%;color:#222;">&gt; 100</div>
<div class="t" style="right:624.00px;top:448.60px;font-size:7.1px;line-height:10px;transform:scaleX(0.9524);transform-origin:100% 50%;color:#222;">n/a</div>
<div class="t" style="right:582.95px;top:448.60px;font-size:7.1px;line-height:10px;transform:scaleX(0.8350);transform-origin:100% 50%;color:#222;">&gt; 100</div>
<div class="t" style="right:541.70px;top:448.60px;font-size:7.1px;line-height:10px;transform:scaleX(0.8350);transform-origin:100% 50%;color:#222;">&gt; 100</div>
<div class="t" style="right:508.95px;top:448.60px;font-size:7.1px;line-height:10px;transform:scaleX(0.8300);transform-origin:100% 50%;color:#3a76c2;">30</div>
<div class="t" style="right:472.15px;top:448.60px;font-size:7.1px;line-height:10px;transform:scaleX(0.8300);transform-origin:100% 50%;color:#3a76c2;">99</div>
<div class="t" style="right:433.10px;top:448.60px;font-size:7.1px;line-height:10px;transform:scaleX(0.9524);transform-origin:100% 50%;color:#222;">n/a</div>
<div class="t" style="right:396.45px;top:448.60px;font-size:7.1px;line-height:10px;transform:scaleX(0.9524);transform-origin:100% 50%;color:#222;">n/a</div>
<div class="t" style="left:634.50px;top:448.60px;font-size:7.1px;line-height:10px;transform:scaleX(0.9726);transform-origin:0 50%;color:#222;">n/a</div>
<div class="r" style="left:134px;top:462.80px;width:5px;height:0;border-top:0.7px solid #dcdcdc;"></div>
<svg style="left:140px;top:459.10px" width="7.5" height="8" viewBox="0 0 15 16"><rect x="0.5" y="0.5" width="14" height="15" fill="#fff" stroke="#cfcfcf" stroke-width="0.8"/><path d="M3 14 L7.5 2.5 L12 14 M5 9.5 H10" stroke="#333" stroke-width="1.3" fill="none"/><path d="M2.5 13 L6 6" stroke="#e8a21a" stroke-width="1.6"/></svg>
<div class="t" style="left:151.50px;top:458.30px;font-size:7.3px;line-height:10px;transform:scaleX(0.8200);transform-origin:0 50%;color:#1a1a1a;-webkit-text-stroke:0.1px #1a1a1a;">заказать пластиковые окна</div>
<div class="t" style="right:708.35px;top:458.30px;font-size:7.8px;line-height:10px;font-weight:bold;transform:scaleX(0.8500);transform-origin:100% 50%;color:#111;">88</div>
<div class="t" style="right:720.52px;top:458.20px;font-size:7.1px;line-height:10px;transform:scaleX(0.8300);transform-origin:100% 50%;color:#f05050;">(-69)</div>
<div class="t" style="right:667.30px;top:458.20px;font-size:7.1px;line-height:10px;transform:scaleX(0.8300);transform-origin:100% 50%;color:#222;">19</div>
<div class="t" style="right:624.00px;top:458.20px;font-size:7.1px;line-height:10px;transform:scaleX(0.9524);transform-origin:100% 50%;color:#222;">n/a</div>
<div class="t" style="right:583.25px;top:458.20px;font-size:7.1px;line-height:10px;transform:scaleX(0.9524);transform-origin:100% 50%;color:#222;">n/a</div>
<div class="t" style="right:541.70px;top:458.20px;font-size:7.1px;line-height:10px;transform:scaleX(0.8350);transform-origin:100% 50%;color:#222;">&gt; 100</div>
<div class="t" style="right:508.95px;top:458.20px;font-size:7.1px;line-height:10px;transform:scaleX(0.8300);transform-origin:100% 50%;color:#3a76c2;">19</div>
<div class="t" style="right:472.15px;top:458.20px;font-size:7.1px;line-height:10px;transform:scaleX(0.8300);transform-origin:100% 50%;color:#3a76c2;">94</div>
<div class="t" style="right:433.10px;top:458.20px;font-size:7.1px;line-height:10px;transform:scaleX(0.9524);transform-origin:100% 50%;color:#222;">n/a</div>
<div class="t" style="right:396.45px;top:458.20px;font-size:7.1px;line-height:10px;transform:scaleX(0.9524);transform-origin:100% 50%;color:#222;">n/a</div>
<div class="t" style="left:634.50px;top:458.20px;font-size:7.1px;line-height:10px;transform:scaleX(0.8300);transform-origin:0 50%;color:#2040e0;text-decoration:underline;">/</div>
<div class="r" style="left:134px;top:472.40px;width:5px;height:0;border-top:0.7px solid #dcdcdc;"></div>
<svg style="left:140px;top:468.70px" width="7.5" height="8" viewBox="0 0 15 16"><rect x="0.5" y="0.5" width="14" height="15" fill="#fff" stroke="#cfcfcf" stroke-width="0.8"/><path d="M3 14 L7.5 2.5 L12 14 M5 9.5 H10" stroke="#333" stroke-width="1.3" fill="none"/><path d="M2.5 13 L6 6" stroke="#e8a21a" stroke-width="1.6"/></svg>
<div class="t" style="left:151.50px;top:467.90px;font-size:7.3px;line-height:10px;transform:scaleX(0.8200);transform-origin:0 50%;color:#1a1a1a;-webkit-text-stroke:0.1px #1a1a1a;">заказать пластиковые окна в москве</div>
<div class="t" style="right:708.35px;top:467.90px;font-size:7.8px;line-height:10px;font-weight:bold;transform:scaleX(0.8500);transform-origin:100% 50%;color:#111;">93</div>
<div class="t" style="right:720.52px;top:467.80px;font-size:7.1px;line-height:10px;transform:scaleX(0.8300);transform-origin:100% 50%;color:#f05050;">(-82)</div>
<div class="t" style="right:667.30px;top:467.80px;font-size:7.1px;line-height:10px;transform:scaleX(0.8300);transform-origin:100% 50%;color:#222;">11</div>
<div class="t" style="right:624.00px;top:467.80px;font-size:7.1px;line-height:10px;transform:scaleX(0.9524);transform-origin:100% 50%;color:#222;">n/a</div>
<div class="t" style="right:585.55px;top:467.80px;font-size:7.1px;line-height:10px;transform:scaleX(0.8300);transform-origin:100% 50%;color:#222;">28</div>
<div class="t" style="right:541.70px;top:467.80px;font-size:7.1px;line-height:10px;transform:scaleX(0.8350);transform-origin:100% 50%;color:#222;">&gt; 100</div>
<div class="t" style="right:508.95px;top:467.80px;font-size:7.1px;line-height:10px;transform:scaleX(0.8300);transform-origin:100% 50%;color:#3a76c2;">11</div>
<div class="t" style="right:470.05px;top:467.80px;font-size:7.1px;line-height:10px;transform:scaleX(0.8350);transform-origin:100% 50%;color:#222;">&gt; 100</div>
<div class="t" style="right:433.10px;top:467.80px;font-size:7.1px;line-height:10px;transform:scaleX(0.9524);transform-origin:100% 50%;color:#222;">n/a</div>
<div class="t" style="right:396.45px;top:467.80px;font-size:7.1px;line-height:10px;transform:scaleX(0.9524);transform-origin:100% 50%;color:#222;">n/a</div>
<div class="t" style="left:634.50px;top:467.80px;font-size:7.1px;line-height:10px;transform:scaleX(0.8300);transform-origin:0 50%;color:#2040e0;text-decoration:underline;">/</div>
<div class="r" style="left:134px;top:482.00px;width:5px;height:0;border-top:0.7px solid #dcdcdc;"></div>
<svg style="left:140px;top:478.30px" width="7.5" height="8" viewBox="0 0 15 16"><rect x="0.5" y="0.5" width="14" height="15" fill="#fff" stroke="#cfcfcf" stroke-width="0.8"/><path d="M3 14 L7.5 2.5 L12 14 M5 9.5 H10" stroke="#333" stroke-width="1.3" fill="none"/><path d="M2.5 13 L6 6" stroke="#e8a21a" stroke-width="1.6"/></svg>
<div class="t" style="left:151.50px;top:477.50px;font-size:7.3px;line-height:10px;transform:scaleX(0.8200);transform-origin:0 50%;color:#1a1a1a;-webkit-text-stroke:0.1px #1a1a1a;">заказать стеклопакет</div>
<div class="t" style="right:705.95px;top:477.40px;font-size:7.1px;line-height:10px;transform:scaleX(0.8350);transform-origin:100% 50%;color:#222;">&gt; 100</div>
<div class="t" style="right:667.30px;top:477.40px;font-size:7.1px;line-height:10px;transform:scaleX(0.8300);transform-origin:100% 50%;color:#222;">59</div>
<div class="t" style="right:624.00px;top:477.40px;font-size:7.1px;line-height:10px;transform:scaleX(0.9524);transform-origin:100% 50%;color:#222;">n/a</div>
<div class="t" style="right:583.25px;top:477.40px;font-size:7.1px;line-height:10px;transform:scaleX(0.9524);transform-origin:100% 50%;color:#222;">n/a</div>
<div class="t" style="right:544.30px;top:477.40px;font-size:7.1px;line-height:10px;transform:scaleX(0.8300);transform-origin:100% 50%;color:#111;">31</div>
<div class="t" style="right:552.45px;top:477.40px;font-size:7.1px;line-height:10px;transform:scaleX(0.8300);transform-origin:100% 50%;color:#f05050;">(-1)</div>
<div class="t" style="right:508.95px;top:477.40px;font-size:7.1px;line-height:10px;transform:scaleX(0.8300);transform-origin:100% 50%;color:#3a76c2;">30</div>
<div class="t" style="right:470.05px;top:477.40px;font-size:7.1px;line-height:10px;transform:scaleX(0.8350);transform-origin:100% 50%;color:#222;">&gt; 100</div>
<div class="t" style="right:433.10px;top:477.40px;font-size:7.1px;line-height:10px;transform:scaleX(0.9524);transform-origin:100% 50%;color:#222;">n/a</div>
<div class="t" style="right:396.45px;top:477.40px;font-size:7.1px;line-height:10px;transform:scaleX(0.9524);transform-origin:100% 50%;color:#222;">n/a</div>
<div class="t" style="left:634.50px;top:477.40px;font-size:7.1px;line-height:10px;transform:scaleX(0.9726);transform-origin:0 50%;color:#222;">n/a</div>
<div class="r" style="left:1011.10px;top:342.80px;width:8.10px;height:144.90px;background:#f0f0f0;"></div>
<svg style="left:1012.8px;top:346.3px" width="4.4" height="2.8" viewBox="0 0 8 5"><path d="M0.8 4.3 L4 1.1 L7.2 4.3" fill="none" stroke="#444" stroke-width="1.6"/></svg>
<div class="r" style="left:1011.30px;top:352.00px;width:7.70px;height:12.60px;background:#cdcdcd;"></div>
<svg style="left:1012.9px;top:481.4px" width="4.4" height="2.8" viewBox="0 0 8 5"><path d="M0.8 0.8 L4 4 L7.2 0.8" fill="none" stroke="#444" stroke-width="1.6"/></svg>
<div class="r" style="left:485.20px;top:491.80px;width:53.70px;height:4.10px;background:linear-gradient(#fafafa,#e6e6e6);border:0.6px solid #b4b4b4;border-radius:0.6px;"></div>
<svg style="left:488.5px;top:492.4px" width="4" height="3" viewBox="0 0 8 6"><path d="M0.5 1 L4 5 L7.5 1 Z" fill="#2233aa"/></svg>
<svg style="left:532.5px;top:492.4px" width="4" height="3" viewBox="0 0 8 6"><path d="M0.5 1 L4 5 L7.5 1 Z" fill="#2233aa"/></svg>
<div class="r" style="left:0.75px;top:506.50px;width:1021.45px;height:58.00px;background:#fff;"></div>
<div class="r" style="left:2.20px;top:508.20px;width:1019.30px;height:55.40px;background:#f4f4f4;"></div>
<div class="r" style="left:0.75px;top:496.20px;width:30.15px;height:12.30px;background:#fff;"></div>
<div class="r" style="left:30.90px;top:497.10px;width:20.70px;height:9.40px;background:#f0f0f0;border:0.6px solid #d9d9d9;border-bottom:none;"></div>
<div class="t" style="left:3.90px;top:497.20px;font-size:7.3px;line-height:10px;transform:scaleX(0.8457);transform-origin:0 50%;color:#222;">Новости</div>
<div class="t" style="left:34.00px;top:497.80px;font-size:7.3px;line-height:10px;transform:scaleX(0.8469);transform-origin:0 50%;color:#222;">Лог</div>
<div class="t" style="left:8.60px;top:514.60px;font-size:7.0px;line-height:10px;font-weight:bold;transform:scaleX(0.9116);transform-origin:0 50%;color:#111;">11.03.2019 - SiteAnalyzer 1.8</div>
<div class="t" style="left:8.60px;top:522.60px;font-size:7.2px;line-height:10px;transform:scaleX(0.9003);transform-origin:0 50%;color:#222;">Полностью переработан раздел "Статистика SEO" (теперь SEO-аудит определяет 60+ ключевых ошибок внутренней оптимизации), добавлена функция расчета внутреннего PageRank для любой страницы сайта...</div>
<div class="t" style="left:658.30px;top:522.60px;font-size:7.2px;line-height:10px;transform:scaleX(0.9183);transform-origin:0 50%;color:#1e5fb8;text-decoration:underline;">Подробнее...</div>
<div class="t" style="left:8.60px;top:540.40px;font-size:7.0px;line-height:10px;font-weight:bold;transform:scaleX(0.8913);transform-origin:0 50%;color:#111;">07.02.2019 - Адаптивная верстка VS мобильный сайт, что выбрать?</div>
<div class="t" style="left:8.60px;top:549.00px;font-size:7.2px;line-height:10px;transform:scaleX(0.9017);transform-origin:0 50%;color:#222;">Новая статья в которой проводится сравнение плюсов и минусов адаптивной верстки и мобильного сайта на поддомене...</div>
<div class="t" style="left:383.80px;top:549.00px;font-size:7.2px;line-height:10px;transform:scaleX(0.9183);transform-origin:0 50%;color:#1e5fb8;text-decoration:underline;">Подробнее...</div>
<svg style="left:802px;top:516.8px" width="6" height="5" viewBox="0 0 24 20"><path d="M23 2.5c-.8.4-1.7.6-2.6.7.9-.6 1.6-1.4 2-2.5-.9.5-1.9.9-2.9 1.1C18.6.9 17.4.3 16 .3c-2.5 0-4.6 2.1-4.6 4.6 0 .4 0 .7.1 1C7.7 5.7 4.3 3.9 2.1 1.1c-.4.7-.6 1.5-.6 2.3 0 1.6.8 3 2.1 3.8-.8 0-1.5-.2-2.1-.6v.1c0 2.2 1.6 4.1 3.7 4.5-.4.1-.8.2-1.2.2-.3 0-.6 0-.9-.1.6 1.8 2.3 3.2 4.3 3.2-1.6 1.2-3.6 2-5.7 2-.4 0-.7 0-1.1-.1 2 1.3 4.5 2.1 7.1 2.1 8.5 0 13.1-7 13.1-13.1v-.6c.9-.6 1.7-1.4 2.2-2.3z" fill="#1da1f2"/></svg>
<div class="t" style="left:811.70px;top:514.80px;font-size:7.2px;line-height:10px;transform:scaleX(0.9346);transform-origin:0 50%;color:#1e5fb8;text-decoration:underline;">Твиты ↓</div>
<div class="r" style="left:963.00px;top:512.50px;width:9.70px;height:9.30px;background:#3b6fb0;border-radius:1px;"></div>
<div class="r" style="left:975.30px;top:512.50px;width:9.70px;height:9.30px;background:#2aa3e0;border-radius:1px;"></div>
<div class="r" style="left:987.00px;top:512.50px;width:9.70px;height:9.30px;background:#3a62ad;border-radius:1px;"></div>
<svg style="left:963px;top:512.5px" width="34" height="9.3" viewBox="0 0 68 18.6"><rect x="5" y="5" width="9" height="8" rx="1.5" fill="none" stroke="#fff" stroke-width="1.6"/><path d="M27 13 Q33 15 36 7 L38 5 L35.5 5.5 Q33 4 31 6.5 Q27 6 25 5 Q25 8 27 9 Q26 9 25.5 9 Q27 12 29 12 Q27 13.5 24.5 13 Z" fill="#fff"/><path d="M53 17 V9 H51.5 V7 H53 V5.5 Q53 3 56 3 H57.5 V5 H56.3 Q55.4 5 55.4 6 V7 H57.6 L57.3 9 H55.4 V17 Z" fill="#fff"/></svg>
<div class="t" style="left:801.40px;top:533.20px;font-size:7.2px;line-height:10px;transform:scaleX(0.9425);transform-origin:0 50%;color:#1e5fb8;text-decoration:underline;">@majento_ru</div>
<div class="t" style="left:844.12px;top:533.20px;font-size:7.2px;line-height:10px;transform:scaleX(0.9425);transform-origin:0 50%;color:#222;">(11.03.2019)</div>
<div class="t" style="left:801.40px;top:541.20px;font-size:7.2px;line-height:10px;transform:scaleX(0.9028);transform-origin:0 50%;color:#222;">Выпущена новая версия SiteAnalyzer 1.8! Полностью переработан</div>
<div class="t" style="left:801.40px;top:549.00px;font-size:7.2px;line-height:10px;transform:scaleX(0.9077);transform-origin:0 50%;color:#222;">раздел "Статистика...</div>
<div class="t" style="left:801.40px;top:556.80px;font-size:7.2px;line-height:10px;transform:scaleX(0.8862);transform-origin:0 50%;color:#3a7ad0;">Перейти...</div>
<div class="r" style="left:1012.80px;top:508.50px;width:8.20px;height:54.50px;background:#ebebeb;"></div>
<svg style="left:1013.9px;top:518.3px" width="6.6" height="4.4" viewBox="0 0 12 8"><path d="M1 7 L6 1.8 L11 7" fill="none" stroke="#4a4a4a" stroke-width="1.9"/></svg>
<div class="r" style="left:1013.30px;top:527.00px;width:7.60px;height:7.80px;background:#cdcdcd;"></div>
<svg style="left:1013.9px;top:550px" width="6.6" height="4.4" viewBox="0 0 12 8"><path d="M1 1 L6 6.2 L11 1" fill="none" stroke="#4a4a4a" stroke-width="1.9"/></svg>
<div class="r" style="left:0.00px;top:564.50px;width:1024.00px;height:10.20px;background:#efefef;border-top:0.7px solid #e2e2e2;"></div>
<div class="r" style="left:68.75px;top:565.50px;width:0.70px;height:9.00px;background:#d4d4d4;"></div>
<div class="r" style="left:208.00px;top:565.50px;width:0.70px;height:9.00px;background:#d4d4d4;"></div>
<div class="r" style="left:276.50px;top:565.50px;width:0.70px;height:9.00px;background:#d4d4d4;"></div>
<div class="r" style="left:426.75px;top:565.50px;width:0.70px;height:9.00px;background:#d4d4d4;"></div>
<div class="r" style="left:534.00px;top:565.50px;width:0.70px;height:9.00px;background:#d4d4d4;"></div>
<div class="t" style="left:1.50px;top:566.40px;font-size:7.3px;line-height:10px;transform:scaleX(0.8660);transform-origin:0 50%;color:#222;">Потоков: 0</div>
<div class="t" style="left:72.00px;top:566.40px;font-size:7.3px;line-height:10px;transform:scaleX(0.8426);transform-origin:0 50%;color:#222;">Запросов в очереди: 0 из 181</div>
<div class="t" style="left:210.00px;top:566.40px;font-size:7.3px;line-height:10px;transform:scaleX(0.8561);transform-origin:0 50%;color:#222;">Капчи: 0 из 0</div>
<div class="t" style="left:279.75px;top:566.40px;font-size:7.3px;line-height:10px;transform:scaleX(0.8607);transform-origin:0 50%;color:#222;">Общее количество запросов: 1774</div>
<div class="t" style="left:946.00px;top:566.40px;font-size:7.3px;line-height:10px;transform:scaleX(0.8370);transform-origin:0 50%;color:#222;">Память: 163,0 КБ / 47,9 |</div>
<div class="r" style="left:0.00px;top:574.60px;width:1024.00px;height:1.40px;background:#0a0a0a;"></div>
</body></html>
